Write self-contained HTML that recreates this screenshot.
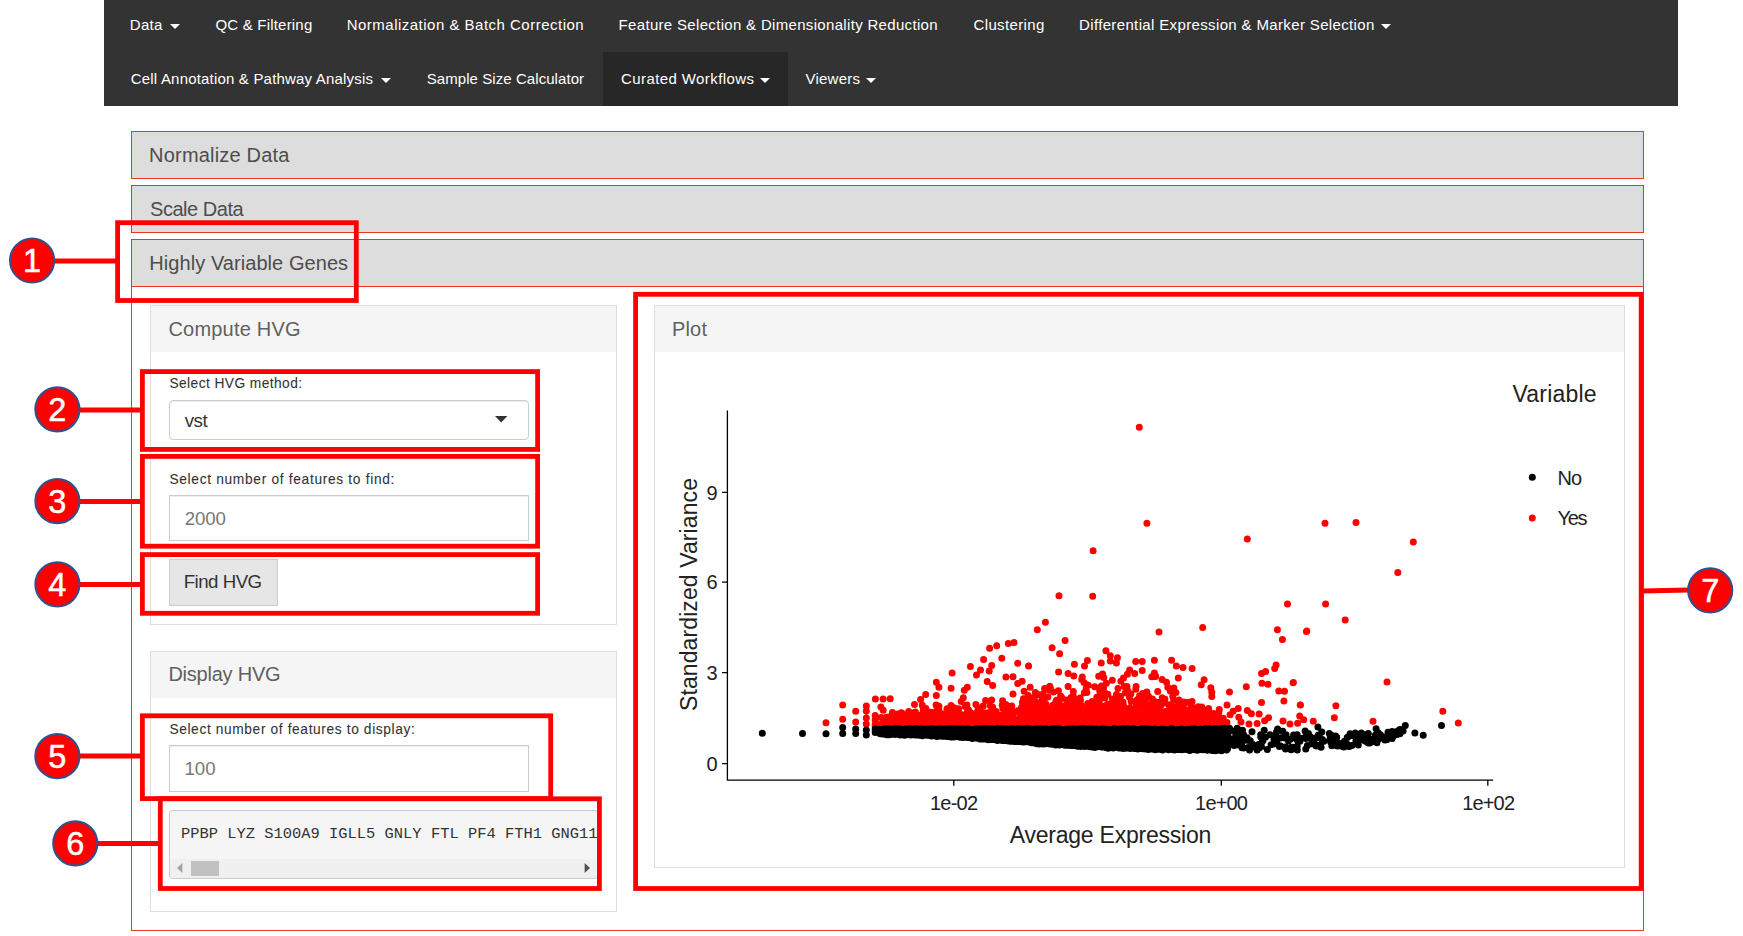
<!DOCTYPE html>
<html lang="en">
<head>
<meta charset="utf-8">
<title>Seurat Curated Workflow - Highly Variable Genes</title>
<style>
html,body{margin:0;padding:0;background:#fff;}
body{width:1743px;height:936px;position:relative;overflow:hidden;font-family:"Liberation Sans",sans-serif;}
.abs{position:absolute;box-sizing:border-box;}
.t{position:absolute;white-space:nowrap;line-height:1;}
#nav{left:104px;top:0;width:1574px;height:106px;background:#333;}
#active{left:603px;top:52px;width:185px;height:54px;background:#272727;}
.caret{position:absolute;width:0;height:0;border-left:5px solid transparent;border-right:5px solid transparent;border-top:5.4px solid #fff;}
.phead{background:#ddd;border:1px solid #e8391f;left:131px;width:1513px;height:48px;}
#pbody{left:131px;top:239px;width:1513px;height:692px;border:1px solid #e8391f;background:#fff;}
.card{border:1px solid #ddd;background:#fff;}
.chead{position:absolute;left:0;top:0;right:0;height:45.6px;background:#f5f5f5;}
.inp{border:1px solid #ccc;background:#fff;box-shadow:inset 0 1px 1px rgba(0,0,0,.075);}
#btn{left:169px;top:559px;width:109px;height:47px;background:#e6e6e6;border:1px solid #ccc;}
#pre{left:169px;top:810px;width:429px;height:69px;background:#f5f5f5;border:1px solid #ccc;border-radius:3px;overflow:hidden;}
#anno{position:absolute;left:0;top:0;width:1743px;height:936px;z-index:10;}
#plot{position:absolute;left:0;top:0;width:1743px;height:936px;z-index:2;}
#textlayer{position:absolute;left:0;top:0;width:1743px;height:936px;z-index:5;}
</style>
</head>
<body>
<nav id="nav" class="abs"></nav>
<div id="active" class="abs"></div>
<i class="caret" style="left:169.9px;top:24px"></i>
<i class="caret" style="left:1380.8px;top:24px"></i>
<i class="caret" style="left:380.8px;top:78px"></i>
<i class="caret" style="left:760px;top:78px"></i>
<i class="caret" style="left:865.6px;top:78px"></i>

<section class="abs phead" style="top:131px"></section>
<section class="abs phead" style="top:185px"></section>
<section id="pbody" class="abs"></section>
<section class="abs phead" style="top:239px"></section>

<div class="abs card" style="left:150px;top:305px;width:467px;height:320px"><div class="chead"></div></div>
<div class="abs card" style="left:150px;top:651px;width:467px;height:261px"><div class="chead"></div></div>
<div class="abs card" style="left:654px;top:305px;width:971px;height:563px"><div class="chead"></div></div>

<div class="abs inp" style="left:169px;top:400px;width:359.5px;height:40px;border-radius:4px"></div>
<svg class="abs" style="left:495px;top:416px" width="13" height="7" viewBox="0 0 13 7"><path d="M0 0h12.4L6.2 6.4z" fill="#333"/></svg>
<div class="abs inp" style="left:169px;top:495px;width:359.5px;height:46px"></div>
<div id="btn" class="abs"></div>
<div class="abs inp" style="left:169px;top:745px;width:359.5px;height:46.5px"></div>
<div id="pre" class="abs">
  <div class="abs" style="left:0;top:47.5px;width:429px;height:20px;background:#f0f0f0"></div>
  <div class="abs" style="left:20.5px;top:49.8px;width:28.8px;height:14.8px;background:#c1c1c1"></div>
  <svg class="abs" style="left:6px;top:51px" width="8" height="12" viewBox="0 0 8 12"><path d="M6.4 1v10L1 6z" fill="#a3a3a3"/></svg>
  <svg class="abs" style="left:413px;top:51px" width="8" height="12" viewBox="0 0 8 12"><path d="M1.6 1v10L7 6z" fill="#505050"/></svg>
</div>

<div id="textlayer">
<span class="t" style="left:129.80px;top:17.00px;font:400 15px/1 'Liberation Sans',sans-serif;color:#fff;letter-spacing:0.286px;">Data</span>
<span class="t" style="left:215.50px;top:17.00px;font:400 15px/1 'Liberation Sans',sans-serif;color:#fff;letter-spacing:0.196px;">QC &amp; Filtering</span>
<span class="t" style="left:346.70px;top:17.00px;font:400 15px/1 'Liberation Sans',sans-serif;color:#fff;letter-spacing:0.490px;">Normalization &amp; Batch Correction</span>
<span class="t" style="left:618.60px;top:17.00px;font:400 15px/1 'Liberation Sans',sans-serif;color:#fff;letter-spacing:0.321px;">Feature Selection &amp; Dimensionality Reduction</span>
<span class="t" style="left:973.50px;top:17.00px;font:400 15px/1 'Liberation Sans',sans-serif;color:#fff;letter-spacing:0.368px;">Clustering</span>
<span class="t" style="left:1079.00px;top:17.00px;font:400 15px/1 'Liberation Sans',sans-serif;color:#fff;letter-spacing:0.358px;">Differential Expression &amp; Marker Selection</span>
<span class="t" style="left:130.80px;top:71.30px;font:400 15px/1 'Liberation Sans',sans-serif;color:#fff;letter-spacing:0.187px;">Cell Annotation &amp; Pathway Analysis</span>
<span class="t" style="left:426.70px;top:71.30px;font:400 15px/1 'Liberation Sans',sans-serif;color:#fff;letter-spacing:0.071px;">Sample Size Calculator</span>
<span class="t" style="left:621.00px;top:71.30px;font:400 15px/1 'Liberation Sans',sans-serif;color:#fff;letter-spacing:0.411px;">Curated Workflows</span>
<span class="t" style="left:805.50px;top:71.30px;font:400 15px/1 'Liberation Sans',sans-serif;color:#fff;letter-spacing:0.237px;">Viewers</span>
<span class="t" style="left:149.10px;top:145.47px;font:400 20px/1 'Liberation Sans',sans-serif;color:#4d4d4d;letter-spacing:0.192px;">Normalize Data</span>
<span class="t" style="left:150.10px;top:199.47px;font:400 20px/1 'Liberation Sans',sans-serif;color:#4d4d4d;letter-spacing:-0.479px;">Scale Data</span>
<span class="t" style="left:149.30px;top:253.17px;font:400 20px/1 'Liberation Sans',sans-serif;color:#4d4d4d;letter-spacing:0.065px;">Highly Variable Genes</span>
<span class="t" style="left:168.40px;top:318.87px;font:400 20px/1 'Liberation Sans',sans-serif;color:#606060;letter-spacing:0.211px;">Compute HVG</span>
<span class="t" style="left:168.40px;top:664.17px;font:400 20px/1 'Liberation Sans',sans-serif;color:#606060;letter-spacing:-0.232px;">Display HVG</span>
<span class="t" style="left:671.90px;top:318.87px;font:400 20px/1 'Liberation Sans',sans-serif;color:#606060;letter-spacing:0.198px;">Plot</span>
<span class="t" style="left:169.40px;top:377.36px;font:400 13.75px/1 'Liberation Sans',sans-serif;color:#333;letter-spacing:0.434px;-webkit-text-stroke:0.08px #333;">Select HVG method:</span>
<span class="t" style="left:169.40px;top:472.76px;font:400 13.75px/1 'Liberation Sans',sans-serif;color:#333;letter-spacing:0.681px;-webkit-text-stroke:0.08px #333;">Select number of features to find:</span>
<span class="t" style="left:169.40px;top:722.76px;font:400 13.75px/1 'Liberation Sans',sans-serif;color:#333;letter-spacing:0.618px;-webkit-text-stroke:0.08px #333;">Select number of features to display:</span>
<span class="t" style="left:184.70px;top:412.17px;font:400 18.7px/1 'Liberation Sans',sans-serif;color:#333;letter-spacing:-0.494px;">vst</span>
<span class="t" style="left:184.70px;top:509.87px;font:400 18.7px/1 'Liberation Sans',sans-serif;color:#777;letter-spacing:-0.160px;">2000</span>
<span class="t" style="left:184.40px;top:760.37px;font:400 18.7px/1 'Liberation Sans',sans-serif;color:#777;letter-spacing:0.057px;">100</span>
<span class="t" style="left:183.70px;top:573.07px;font:400 18.7px/1 'Liberation Sans',sans-serif;color:#333;letter-spacing:-0.515px;">Find HVG</span>
<span class="t" style="left:181.00px;top:826.64px;font:400 15.43px/1 'Liberation Mono',sans-serif;color:#333;letter-spacing:0.000px;white-space:pre;clip-path:inset(-5px 277.7px -5px -5px);">PPBP LYZ S100A9 IGLL5 GNLY FTL PF4 FTH1 GNG11 S100A8 NKG7 HLA-DRA GZMB CD74</span>
</div>

<svg id="plot" viewBox="0 0 1743 936" font-family="'Liberation Sans',sans-serif">
  <g stroke="#000" stroke-width="1.3" fill="none">
    <path d="M727.4 410.6V780.1H1493.2"/>
    <path d="M722 492.4h5.4M722 582.1h5.4M722 672.6h5.4M722 763.6h5.4"/>
    <path d="M953.8 780v5.8M1221.3 780v5.8M1487.8 780v5.8"/>
  </g>
  <path d="M826.0 722.8h.01M842.7 719.3h.01M842.7 705.0h.01M855.7 722.0h.01M855.7 711.2h.01M866.3 724.0h.01M866.3 718.0h.01M866.3 711.0h.01M866.3 706.0h.01M875.2 724.4h.01M875.2 726.1h.01M875.2 719.9h.01M875.2 725.5h.01M875.2 715.4h.01M875.2 724.6h.01M875.2 726.3h.01M875.2 725.2h.01M883.0 726.3h.01M883.0 721.9h.01M883.0 725.0h.01M883.0 724.1h.01M883.0 720.2h.01M883.0 725.4h.01M883.0 723.5h.01M883.0 721.3h.01M889.8 720.4h.01M889.8 717.8h.01M889.8 721.5h.01M889.8 722.9h.01M889.8 718.8h.01M889.8 723.8h.01M889.8 726.2h.01M889.8 722.1h.01M895.9 726.2h.01M895.9 725.9h.01M895.9 724.3h.01M895.9 726.1h.01M895.9 723.0h.01M895.9 719.0h.01M895.9 725.1h.01M895.9 724.6h.01M901.4 726.5h.01M901.4 724.4h.01M901.4 712.7h.01M901.4 723.2h.01M901.4 721.4h.01M901.4 716.1h.01M901.4 717.1h.01M906.5 724.6h.01M906.5 726.5h.01M906.5 726.0h.01M906.5 726.4h.01M906.5 722.2h.01M906.5 725.2h.01M906.5 724.4h.01M911.1 718.4h.01M911.1 726.4h.01M911.1 723.0h.01M911.1 722.9h.01M911.1 723.1h.01M911.1 717.4h.01M911.1 725.1h.01M915.4 717.6h.01M915.4 718.6h.01M915.4 725.3h.01M915.4 724.5h.01M915.4 726.4h.01M915.4 725.1h.01M915.4 712.0h.01M919.4 721.9h.01M919.4 717.9h.01M919.4 721.6h.01M919.4 726.1h.01M919.4 715.3h.01M919.4 720.0h.01M919.4 725.6h.01M923.2 725.9h.01M923.2 715.5h.01M923.2 725.8h.01M923.2 708.1h.01M923.2 724.5h.01M923.2 725.8h.01M923.2 709.9h.01M926.7 724.9h.01M926.7 722.3h.01M926.7 723.9h.01M926.7 715.1h.01M926.7 723.6h.01M926.7 715.4h.01M926.7 714.7h.01M930.0 725.6h.01M930.0 720.4h.01M930.0 724.6h.01M930.0 722.6h.01M930.0 726.0h.01M930.0 725.1h.01M930.0 719.5h.01M933.1 720.9h.01M933.1 722.9h.01M933.1 712.9h.01M933.1 716.5h.01M933.1 725.1h.01M933.1 712.8h.01M933.1 725.8h.01M936.1 725.7h.01M936.1 721.3h.01M936.1 716.2h.01M936.1 725.3h.01M936.1 724.1h.01M936.1 705.0h.01M936.1 725.7h.01M938.9 723.7h.01M938.9 724.6h.01M938.9 723.0h.01M938.9 706.2h.01M938.9 710.0h.01M938.9 725.0h.01M941.6 725.7h.01M941.6 722.4h.01M941.6 726.0h.01M941.6 720.9h.01M941.6 726.1h.01M941.6 721.6h.01M944.2 713.8h.01M944.2 725.8h.01M944.2 725.2h.01M944.2 725.6h.01M944.2 725.4h.01M944.2 724.7h.01M946.7 720.0h.01M946.7 725.5h.01M946.7 713.2h.01M946.7 718.1h.01M946.7 723.2h.01M946.7 724.1h.01M949.1 724.0h.01M949.1 726.2h.01M949.1 726.1h.01M949.1 725.1h.01M949.1 726.1h.01M949.1 716.5h.01M951.3 725.0h.01M951.3 708.8h.01M951.3 725.1h.01M951.3 724.7h.01M951.3 726.5h.01M951.3 723.3h.01M953.5 726.3h.01M953.5 724.7h.01M953.5 722.1h.01M953.5 719.6h.01M953.5 720.3h.01M953.5 724.1h.01M955.6 715.5h.01M955.6 719.9h.01M955.6 725.8h.01M955.6 723.0h.01M955.6 718.4h.01M955.6 722.1h.01M957.7 725.9h.01M957.7 722.4h.01M957.7 721.6h.01M957.7 723.2h.01M957.7 718.5h.01M957.7 723.0h.01M959.6 720.0h.01M959.6 719.8h.01M959.6 723.1h.01M959.6 723.2h.01M959.6 719.2h.01M959.6 721.4h.01M961.5 726.2h.01M961.5 720.9h.01M961.5 720.8h.01M961.5 722.8h.01M961.5 723.3h.01M963.4 717.7h.01M963.4 723.4h.01M963.4 725.3h.01M963.4 725.3h.01M963.4 725.7h.01M965.2 720.2h.01M965.2 714.7h.01M965.2 726.4h.01M965.2 723.0h.01M965.2 724.6h.01M966.9 716.9h.01M966.9 712.8h.01M966.9 714.3h.01M966.9 724.1h.01M966.9 705.0h.01M968.6 716.9h.01M968.6 711.9h.01M968.6 724.9h.01M968.6 725.4h.01M968.6 709.9h.01M970.2 719.7h.01M970.2 719.4h.01M970.2 719.0h.01M970.2 724.7h.01M970.2 712.4h.01M971.8 724.9h.01M971.8 724.6h.01M971.8 723.8h.01M971.8 725.5h.01M971.8 713.6h.01M973.4 725.3h.01M973.4 724.2h.01M973.4 725.0h.01M973.4 721.9h.01M973.4 718.9h.01M974.9 724.7h.01M974.9 725.8h.01M974.9 721.0h.01M974.9 725.1h.01M974.9 724.9h.01M976.3 726.3h.01M976.3 713.8h.01M976.3 721.5h.01M976.3 723.7h.01M976.3 716.7h.01M977.8 722.3h.01M977.8 710.4h.01M977.8 720.6h.01M977.8 723.0h.01M979.2 720.6h.01M979.2 725.7h.01M979.2 720.7h.01M979.2 725.8h.01M980.5 721.2h.01M980.5 724.4h.01M980.5 708.1h.01M980.5 714.1h.01M981.9 724.4h.01M981.9 722.5h.01M981.9 723.3h.01M981.9 720.1h.01M983.2 719.8h.01M983.2 717.1h.01M983.2 722.4h.01M983.2 705.9h.01M984.4 724.4h.01M984.4 722.4h.01M984.4 725.0h.01M984.4 720.0h.01M985.7 725.6h.01M985.7 726.1h.01M985.7 712.9h.01M985.7 718.6h.01M986.9 718.3h.01M986.9 719.9h.01M986.9 723.7h.01M986.9 725.4h.01M988.1 725.7h.01M988.1 725.1h.01M988.1 716.1h.01M988.1 723.1h.01M989.3 725.2h.01M989.3 712.6h.01M989.3 723.3h.01M989.3 717.6h.01M990.4 724.7h.01M990.4 712.4h.01M990.4 724.5h.01M991.6 724.1h.01M991.6 726.5h.01M991.6 711.2h.01M992.7 722.5h.01M992.7 707.3h.01M992.7 724.7h.01M993.7 716.3h.01M993.7 715.7h.01M993.7 720.6h.01M994.8 726.0h.01M994.8 717.7h.01M994.8 726.1h.01M995.9 712.9h.01M995.9 724.5h.01M995.9 725.9h.01M996.9 724.8h.01M996.9 720.3h.01M996.9 717.7h.01M997.9 714.7h.01M997.9 721.1h.01M997.9 717.9h.01M998.9 725.4h.01M998.9 720.9h.01M998.9 723.2h.01M1164.7 723.8h.01M1077.0 726.5h.01M1005.6 718.8h.01M1162.8 715.1h.01M1068.0 711.4h.01M1135.9 723.6h.01M1096.5 715.2h.01M1152.9 723.8h.01M1024.0 722.8h.01M939.6 724.4h.01M1153.1 716.0h.01M972.8 719.3h.01M949.1 719.7h.01M962.4 726.0h.01M1003.0 721.6h.01M1009.6 710.4h.01M1158.8 712.7h.01M1104.3 722.8h.01M1212.8 726.4h.01M1030.7 722.8h.01M982.9 723.2h.01M1182.4 723.2h.01M893.7 716.6h.01M1010.4 724.7h.01M949.1 724.3h.01M950.3 725.5h.01M1002.4 720.7h.01M1068.9 722.3h.01M1093.7 708.2h.01M1151.6 721.3h.01M1204.5 721.2h.01M1078.1 721.8h.01M956.7 715.7h.01M1118.3 725.2h.01M1206.5 726.3h.01M1145.0 723.1h.01M1096.6 704.2h.01M1037.6 719.4h.01M1134.9 723.8h.01M1123.6 719.6h.01M1147.9 726.0h.01M1011.1 725.5h.01M962.9 722.7h.01M973.4 717.8h.01M939.8 721.8h.01M1189.3 724.6h.01M1163.0 719.4h.01M1053.4 691.9h.01M1035.4 692.5h.01M1099.7 691.1h.01M949.4 717.2h.01M1165.6 711.4h.01M1116.1 725.2h.01M1168.2 712.8h.01M1026.3 716.0h.01M1057.5 711.1h.01M912.9 714.0h.01M1048.9 708.9h.01M1076.9 706.9h.01M1020.7 719.8h.01M901.9 723.5h.01M931.6 717.2h.01M1138.3 719.6h.01M1219.3 709.6h.01M933.2 720.7h.01M1152.6 715.1h.01M895.4 715.3h.01M1066.5 716.2h.01M1176.7 723.4h.01M904.5 714.8h.01M1009.8 726.2h.01M957.8 715.9h.01M987.3 725.5h.01M1199.1 720.6h.01M955.4 723.9h.01M1060.2 725.8h.01M1213.9 718.9h.01M912.3 721.0h.01M1083.6 718.4h.01M961.4 722.9h.01M1173.2 725.1h.01M1193.3 724.3h.01M998.3 722.5h.01M1129.7 716.0h.01M1197.1 721.6h.01M896.0 724.8h.01M1024.8 725.3h.01M1059.9 726.1h.01M1205.2 713.2h.01M1144.1 710.1h.01M1161.2 722.4h.01M1153.0 723.7h.01M1102.4 715.2h.01M1165.9 724.5h.01M1035.4 709.0h.01M1173.9 688.0h.01M949.8 725.3h.01M944.6 720.2h.01M1157.6 714.2h.01M1167.0 718.7h.01M1104.7 694.8h.01M1130.0 713.2h.01M1112.6 718.0h.01M1160.8 716.8h.01M954.5 723.8h.01M1060.9 720.2h.01M1104.3 720.9h.01M1051.1 720.4h.01M1044.6 688.4h.01M937.0 726.4h.01M1150.9 720.3h.01M1069.8 716.2h.01M1043.1 723.6h.01M895.1 717.5h.01M1074.9 721.9h.01M921.1 716.1h.01M1182.6 724.1h.01M1004.1 718.2h.01M1171.8 720.0h.01M1049.9 723.6h.01M1172.2 706.0h.01M1188.4 719.3h.01M1073.0 724.7h.01M922.2 720.3h.01M926.4 718.7h.01M1135.0 718.5h.01M1197.5 719.9h.01M941.4 722.2h.01M1060.8 723.3h.01M1207.3 725.7h.01M994.5 723.9h.01M1107.9 721.6h.01M1066.8 707.4h.01M976.3 719.4h.01M1030.9 698.8h.01M1117.7 725.0h.01M1057.4 715.7h.01M1127.0 721.3h.01M907.3 725.9h.01M1104.1 724.2h.01M1022.4 718.1h.01M1199.9 724.5h.01M1111.7 722.5h.01M1167.8 724.7h.01M1006.7 722.4h.01M980.5 725.7h.01M988.7 724.0h.01M1052.4 710.9h.01M1055.3 719.4h.01M1052.9 710.2h.01M1200.6 709.6h.01M1002.6 700.8h.01M1093.5 712.4h.01M1047.9 723.1h.01M957.1 715.7h.01M1040.7 713.9h.01M1073.5 717.8h.01M986.1 725.3h.01M1032.8 715.3h.01M1099.0 726.5h.01M1147.8 719.4h.01M926.6 725.1h.01M988.0 716.0h.01M1101.0 721.6h.01M1001.8 724.2h.01M1013.2 723.2h.01M1170.1 710.2h.01M1144.3 699.5h.01M1131.6 725.0h.01M913.5 725.7h.01M1005.3 721.2h.01M1178.7 718.2h.01M1063.6 723.4h.01M1034.5 726.0h.01M1185.7 717.6h.01M1039.6 703.5h.01M1019.2 725.6h.01M983.0 716.9h.01M1139.6 722.4h.01M1010.5 725.8h.01M1119.5 721.1h.01M978.3 723.2h.01M969.4 721.2h.01M1132.5 717.6h.01M975.5 714.9h.01M946.5 725.6h.01M999.3 721.8h.01M1078.4 717.0h.01M1152.4 699.0h.01M1075.9 726.0h.01M1181.1 726.3h.01M1026.5 725.1h.01M1116.5 707.5h.01M954.4 724.8h.01M1186.6 725.6h.01M1140.9 706.7h.01M1056.8 724.6h.01M1133.1 721.7h.01M956.5 725.6h.01M1054.8 725.0h.01M1049.1 717.8h.01M1101.6 720.0h.01M1172.7 725.6h.01M1030.6 700.6h.01M1190.2 715.3h.01M1096.7 707.3h.01M1107.7 724.9h.01M1004.3 725.8h.01M1193.1 722.7h.01M1097.4 725.2h.01M1146.4 706.7h.01M1171.6 704.5h.01M1026.3 725.1h.01M1162.1 713.2h.01M1044.7 722.0h.01M964.9 717.3h.01M1073.5 707.1h.01M1034.0 722.7h.01M1089.8 709.9h.01M1195.1 718.2h.01M1055.2 704.7h.01M1161.7 717.3h.01M1041.6 723.1h.01M1195.7 724.0h.01M934.3 725.5h.01M1175.4 719.0h.01M1102.2 716.8h.01M1057.4 717.5h.01M936.9 714.4h.01M942.9 725.8h.01M1137.0 713.7h.01M1174.5 714.6h.01M891.5 725.4h.01M1166.9 724.7h.01M1095.3 708.3h.01M966.0 722.6h.01M1199.9 723.1h.01M1079.2 722.7h.01M1215.7 720.1h.01M1021.7 715.1h.01M1081.6 707.5h.01M1042.1 704.0h.01M1140.4 719.0h.01M1104.8 706.1h.01M1094.7 686.8h.01M888.6 717.0h.01M1148.8 718.1h.01M1186.3 723.1h.01M1148.7 704.8h.01M1045.1 709.1h.01M914.0 725.9h.01M930.3 722.5h.01M1027.9 723.7h.01M1069.3 725.6h.01M1202.1 721.2h.01M1068.3 722.3h.01M1116.7 721.2h.01M1219.6 719.5h.01M1179.8 725.8h.01M952.2 724.4h.01M953.2 723.8h.01M1222.4 724.4h.01M991.8 726.4h.01M1010.9 726.1h.01M1094.4 722.1h.01M1137.3 716.2h.01M1115.1 722.0h.01M1154.6 712.4h.01M1148.8 718.5h.01M1074.5 722.6h.01M911.0 723.6h.01M1120.6 723.9h.01M1189.0 711.3h.01M1177.1 720.0h.01M973.9 724.8h.01M1155.4 676.6h.01M946.7 726.5h.01M1038.6 722.1h.01M1115.2 725.0h.01M1184.6 723.0h.01M1022.1 724.8h.01M1179.7 725.9h.01M1098.8 710.0h.01M1221.8 725.9h.01M1045.2 712.1h.01M902.1 713.3h.01M1007.4 720.5h.01M1041.0 717.4h.01M1208.7 713.7h.01M1004.8 714.5h.01M897.3 724.1h.01M1043.2 717.3h.01M997.4 718.6h.01M1131.2 725.3h.01M1143.8 721.1h.01M960.7 726.1h.01M1072.9 708.1h.01M1218.1 722.3h.01M1011.4 720.9h.01M1136.2 703.4h.01M1056.9 717.4h.01M1186.0 710.1h.01M901.5 723.0h.01M1108.4 724.5h.01M1205.6 725.2h.01M1057.8 716.6h.01M1063.4 726.5h.01M938.0 720.5h.01M955.7 725.0h.01M1174.7 706.7h.01M886.7 720.7h.01M1115.6 720.8h.01M897.4 724.0h.01M997.6 720.8h.01M929.6 720.9h.01M945.0 725.3h.01M1066.7 717.2h.01M1025.8 720.6h.01M968.5 723.8h.01M1144.9 721.6h.01M1171.7 724.4h.01M942.2 721.7h.01M1071.0 697.6h.01M943.9 719.8h.01M1136.2 720.7h.01M954.2 721.8h.01M1161.1 719.2h.01M1077.2 712.9h.01M1118.6 719.6h.01M978.0 723.0h.01M1100.9 698.2h.01M1030.2 724.1h.01M1124.8 709.7h.01M1001.5 718.7h.01M1131.1 701.3h.01M984.8 724.0h.01M1022.4 720.8h.01M1157.4 714.8h.01M1207.6 726.5h.01M927.8 726.3h.01M1064.3 726.2h.01M1093.7 714.2h.01M984.4 715.0h.01M1058.4 690.7h.01M1040.1 716.3h.01M1098.5 722.7h.01M1167.1 726.5h.01M1002.2 723.9h.01M1194.9 726.2h.01M1019.9 718.5h.01M1175.1 725.3h.01M1167.0 721.2h.01M1093.1 719.8h.01M1066.4 700.1h.01M1204.5 718.8h.01M959.8 726.3h.01M1181.1 716.3h.01M1124.9 721.8h.01M1008.6 707.8h.01M1095.5 726.3h.01M1034.2 722.2h.01M925.9 708.5h.01M1200.5 726.5h.01M1059.7 725.2h.01M1152.1 706.1h.01M1169.8 710.0h.01M950.9 726.4h.01M938.2 717.6h.01M1180.7 719.9h.01M996.6 714.1h.01M950.7 724.6h.01M883.2 710.2h.01M1058.9 710.1h.01M1173.1 717.6h.01M1206.9 726.0h.01M1159.0 723.5h.01M1028.8 722.6h.01M1065.3 724.9h.01M1145.3 717.3h.01M1163.6 721.9h.01M1058.4 711.3h.01M1145.5 699.2h.01M1023.5 709.8h.01M1155.3 716.3h.01M1056.7 717.2h.01M930.5 726.0h.01M1024.2 725.3h.01M915.9 720.7h.01M1153.6 714.9h.01M985.8 718.9h.01M1179.7 717.5h.01M993.9 721.3h.01M1052.3 723.1h.01M962.8 716.3h.01M1125.3 692.8h.01M972.4 724.8h.01M1088.6 725.8h.01M1021.0 719.8h.01M1080.1 698.1h.01M1109.2 713.8h.01M1111.5 707.3h.01M1042.9 726.5h.01M1220.9 725.8h.01M946.9 725.3h.01M1132.8 724.7h.01M898.4 723.5h.01M887.6 725.3h.01M1048.2 724.0h.01M883.8 725.3h.01M1000.0 724.0h.01M1058.7 721.5h.01M1028.6 726.3h.01M1182.9 714.7h.01M1083.5 726.5h.01M996.1 711.8h.01M1072.4 723.8h.01M1178.1 705.3h.01M951.5 723.1h.01M1104.4 724.9h.01M1027.0 717.6h.01M1137.2 714.1h.01M1121.8 720.6h.01M926.5 726.4h.01M1182.9 708.9h.01M1164.2 724.4h.01M1036.2 724.2h.01M1189.0 712.4h.01M1047.9 696.9h.01M1006.0 720.4h.01M1137.2 723.2h.01M1048.0 725.4h.01M1171.8 724.4h.01M957.5 724.9h.01M1127.6 713.8h.01M1093.3 702.9h.01M1159.5 723.8h.01M1096.3 724.2h.01M999.3 725.5h.01M930.6 724.4h.01M1196.1 725.9h.01M990.8 721.0h.01M1094.8 726.2h.01M938.7 722.5h.01M1116.2 725.5h.01M1165.2 723.5h.01M1112.7 717.1h.01M1034.1 697.5h.01M1052.6 720.5h.01M1098.0 703.7h.01M1097.6 710.8h.01M1127.0 686.5h.01M1218.3 725.2h.01M1106.5 719.3h.01M995.4 716.9h.01M991.6 718.9h.01M1082.4 719.9h.01M1146.7 710.4h.01M1223.3 718.3h.01M1007.4 718.5h.01M1084.3 692.7h.01M1069.2 721.4h.01M902.3 723.6h.01M1095.7 721.9h.01M943.9 723.3h.01M927.4 725.6h.01M1068.2 721.6h.01M1085.8 717.4h.01M1050.3 724.9h.01M897.3 722.9h.01M1038.0 722.5h.01M1156.8 718.5h.01M1171.6 726.4h.01M956.1 725.4h.01M1043.8 721.1h.01M1049.2 690.1h.01M1066.7 716.7h.01M1114.3 704.5h.01M1032.2 726.1h.01M1110.6 725.6h.01M1157.5 721.0h.01M1128.4 722.3h.01M1011.6 709.3h.01M992.1 724.5h.01M1081.7 679.5h.01M948.6 725.3h.01M1171.5 725.7h.01M1058.7 709.5h.01M1148.4 706.8h.01M949.3 715.7h.01M1039.8 708.9h.01M1076.9 700.5h.01M1078.9 723.0h.01M963.7 723.0h.01M916.5 725.7h.01M1192.9 712.0h.01M963.7 723.1h.01M1076.0 725.2h.01M1007.2 708.1h.01M1151.4 717.7h.01M1118.7 701.8h.01M916.8 717.0h.01M969.4 725.0h.01M957.9 722.9h.01M1110.7 718.8h.01M1076.4 724.7h.01M1149.9 716.9h.01M1023.4 710.6h.01M1210.0 725.5h.01M1050.3 720.0h.01M1004.8 717.0h.01M1087.6 685.1h.01M1196.7 725.7h.01M1072.1 718.1h.01M1168.7 724.3h.01M1013.0 693.9h.01M892.3 722.5h.01M939.2 719.8h.01M1061.7 697.4h.01M992.4 713.5h.01M994.0 726.2h.01M935.1 726.1h.01M1050.3 687.7h.01M1039.1 713.4h.01M907.6 723.2h.01M1097.8 725.2h.01M1109.9 719.1h.01M1029.8 709.7h.01M1142.3 724.9h.01M944.3 726.2h.01M1007.2 719.2h.01M1217.8 715.5h.01M952.5 718.7h.01M1162.2 719.3h.01M949.8 725.3h.01M954.8 721.8h.01M1123.0 702.1h.01M891.2 726.5h.01M1007.5 711.9h.01M946.7 718.8h.01M1198.8 720.2h.01M887.4 722.6h.01M1119.9 708.1h.01M1091.0 725.0h.01M992.1 719.9h.01M931.8 726.0h.01M1002.6 715.7h.01M1099.9 721.0h.01M998.1 721.1h.01M1187.8 721.9h.01M1109.2 706.2h.01M976.1 721.6h.01M1027.7 720.6h.01M1148.5 726.2h.01M1088.1 721.9h.01M1115.6 705.0h.01M1075.5 714.9h.01M1016.3 724.1h.01M1088.8 717.3h.01M992.4 717.5h.01M1085.6 721.2h.01M1003.7 714.1h.01M1200.3 724.6h.01M927.7 721.8h.01M901.6 717.7h.01M1138.8 721.4h.01M1067.4 713.4h.01M967.6 724.1h.01M1169.1 714.4h.01M1111.5 725.1h.01M990.0 724.7h.01M905.8 721.9h.01M1107.8 694.2h.01M1102.3 695.2h.01M1076.1 718.0h.01M1013.6 721.6h.01M883.5 724.7h.01M982.6 720.8h.01M1088.6 718.7h.01M1206.9 725.9h.01M905.3 721.0h.01M1114.9 713.3h.01M1085.9 726.1h.01M1070.6 705.7h.01M1116.4 725.9h.01M952.5 714.9h.01M1099.5 724.3h.01M1146.7 694.2h.01M1190.4 713.8h.01M935.7 723.5h.01M1175.5 722.4h.01M960.8 716.4h.01M1146.1 726.4h.01M923.8 722.7h.01M1214.0 714.5h.01M943.9 722.3h.01M976.3 724.2h.01M963.1 723.3h.01M914.5 721.6h.01M1129.4 697.1h.01M1163.9 725.6h.01M1191.4 705.7h.01M1083.3 725.5h.01M1145.9 724.1h.01M1200.3 723.9h.01M1134.0 711.0h.01M1073.3 722.8h.01M1060.6 712.5h.01M994.3 725.4h.01M1080.8 713.8h.01M925.4 725.0h.01M1164.9 722.5h.01M934.9 723.3h.01M1191.6 726.1h.01M1145.8 714.4h.01M1080.3 713.6h.01M1092.4 724.0h.01M1143.5 724.8h.01M1023.7 709.6h.01M1106.4 717.6h.01M1147.6 718.0h.01M1048.8 717.8h.01M900.0 724.6h.01M910.6 714.3h.01M1131.6 724.3h.01M1187.7 713.3h.01M1130.8 714.9h.01M1156.5 722.8h.01M1182.0 719.5h.01M1160.8 705.6h.01M1004.0 722.9h.01M1041.3 725.7h.01M1193.2 721.6h.01M1099.6 700.1h.01M927.0 724.4h.01M1140.9 716.9h.01M1084.9 722.9h.01M992.3 719.6h.01M1034.4 698.9h.01M1200.2 724.3h.01M1090.2 725.2h.01M1040.6 725.7h.01M1086.2 688.6h.01M1162.3 721.4h.01M1011.8 705.9h.01M918.0 717.8h.01M1187.9 702.2h.01M1129.4 720.3h.01M1062.2 716.0h.01M1094.0 701.6h.01M1198.4 726.4h.01M1166.8 715.2h.01M1131.9 725.5h.01M930.0 715.6h.01M1042.1 719.7h.01M1126.2 725.7h.01M1104.3 709.7h.01M966.5 719.0h.01M1217.8 717.9h.01M1212.2 721.9h.01M1179.3 711.2h.01M1124.4 712.7h.01M975.0 724.2h.01M1029.1 708.1h.01M1167.6 722.8h.01M922.8 724.6h.01M930.7 712.3h.01M1040.4 721.3h.01M1187.6 718.4h.01M1066.9 719.5h.01M1093.5 718.5h.01M959.7 725.7h.01M1087.8 707.1h.01M1064.4 725.8h.01M1130.4 724.5h.01M1006.1 722.6h.01M1160.4 720.0h.01M1060.0 720.8h.01M1092.1 722.5h.01M956.0 722.5h.01M1037.9 713.4h.01M910.7 721.3h.01M1042.3 698.8h.01M1020.3 721.7h.01M1026.3 719.5h.01M1013.5 717.8h.01M1057.8 712.8h.01M1017.3 721.5h.01M1103.1 710.7h.01M1131.2 719.5h.01M934.9 725.9h.01M962.0 725.5h.01M977.0 720.4h.01M1034.3 702.8h.01M996.4 724.7h.01M976.8 725.6h.01M1139.7 715.7h.01M1002.8 715.2h.01M1137.8 719.5h.01M1118.2 713.1h.01M1067.2 725.4h.01M1042.3 695.6h.01M1045.3 715.6h.01M936.1 719.4h.01M1190.1 722.9h.01M1089.7 723.0h.01M987.3 725.7h.01M1141.1 717.6h.01M1214.6 714.7h.01M1211.5 726.4h.01M954.7 708.0h.01M1192.7 719.4h.01M1065.8 720.2h.01M961.6 722.5h.01M1011.3 725.5h.01M1191.8 710.9h.01M1018.1 719.4h.01M1012.0 712.8h.01M987.0 720.2h.01M1102.5 721.6h.01M932.1 723.3h.01M1092.8 705.6h.01M984.7 725.3h.01M1022.2 712.4h.01M995.7 720.1h.01M906.2 726.1h.01M1147.1 717.9h.01M947.3 723.4h.01M1103.1 719.7h.01M1087.4 726.0h.01M1195.1 723.5h.01M1014.7 724.8h.01M1208.7 723.6h.01M1116.8 716.4h.01M983.6 726.3h.01M1154.8 724.4h.01M1105.5 726.3h.01M899.7 725.7h.01M1131.5 714.6h.01M1092.5 726.3h.01M1182.3 720.7h.01M989.9 723.3h.01M929.7 722.4h.01M990.8 719.1h.01M973.1 720.1h.01M1121.0 711.0h.01M1139.9 720.2h.01M1198.1 716.7h.01M1115.9 722.7h.01M1201.8 706.9h.01M1033.4 709.5h.01M1138.8 703.6h.01M1173.3 720.3h.01M1052.5 709.2h.01M1131.8 716.8h.01M893.6 723.8h.01M940.3 717.6h.01M936.0 716.2h.01M993.0 725.6h.01M1159.9 713.5h.01M1057.4 716.5h.01M1101.9 689.4h.01M1088.1 717.1h.01M1073.9 720.3h.01M1141.9 725.0h.01M1142.6 693.5h.01M1162.0 717.6h.01M1038.6 725.4h.01M938.0 722.8h.01M1194.4 725.1h.01M1158.6 707.3h.01M1079.5 703.4h.01M978.3 724.2h.01M1090.1 710.7h.01M1069.7 722.4h.01M1190.9 722.4h.01M992.5 722.4h.01M1146.5 720.9h.01M1134.0 718.0h.01M892.4 712.5h.01M1016.0 720.1h.01M924.0 725.4h.01M964.6 716.6h.01M1091.0 726.0h.01M1010.2 721.1h.01M973.4 724.5h.01M1200.9 724.7h.01M1115.2 725.0h.01M1091.9 713.7h.01M936.2 722.7h.01M1023.6 714.4h.01M1120.5 696.5h.01M1118.0 724.0h.01M977.8 719.6h.01M1175.5 725.9h.01M1059.5 722.8h.01M1075.6 702.4h.01M1103.9 709.5h.01M1163.0 722.9h.01M1121.4 720.6h.01M1077.7 717.6h.01M1135.4 724.2h.01M1183.1 725.0h.01M1024.8 709.5h.01M908.0 719.9h.01M968.1 719.1h.01M888.4 725.9h.01M1040.0 725.6h.01M1076.8 721.5h.01M1155.7 718.4h.01M1216.9 725.5h.01M1204.3 721.2h.01M1094.0 724.2h.01M1027.5 724.2h.01M981.9 721.0h.01M1028.7 712.8h.01M1107.9 704.6h.01M935.6 717.5h.01M1088.1 714.4h.01M998.1 718.8h.01M1056.0 712.4h.01M1111.2 724.6h.01M1020.5 714.6h.01M895.5 722.1h.01M1099.6 710.8h.01M1030.3 720.3h.01M1078.5 710.2h.01M928.6 723.1h.01M1005.8 720.2h.01M1005.8 724.9h.01M995.5 712.2h.01M1042.0 704.1h.01M1154.8 722.7h.01M1102.2 726.4h.01M1208.4 725.8h.01M1091.5 718.1h.01M1136.4 722.2h.01M1202.3 726.0h.01M1177.8 705.8h.01M1021.8 715.7h.01M1189.0 725.9h.01M1182.7 724.0h.01M1173.2 714.7h.01M1075.0 699.4h.01M1173.6 699.8h.01M1107.9 709.9h.01M1136.4 720.1h.01M1085.4 718.0h.01M989.5 724.7h.01M1184.8 710.5h.01M1144.0 711.9h.01M1088.8 716.2h.01M1135.2 726.4h.01M1068.1 686.5h.01M985.7 722.7h.01M930.8 725.1h.01M1179.3 726.2h.01M1172.4 710.1h.01M1191.2 706.2h.01M1044.7 720.1h.01M1139.3 725.0h.01M886.3 725.2h.01M944.1 718.0h.01M1002.2 705.3h.01M1138.6 723.8h.01M1147.8 721.7h.01M1094.0 725.5h.01M1181.6 712.6h.01M1110.2 711.8h.01M1034.0 725.1h.01M1029.0 713.8h.01M1104.9 724.7h.01M998.9 722.3h.01M894.4 726.3h.01M1070.0 724.8h.01M1158.7 708.1h.01M1025.6 719.4h.01M1049.8 686.2h.01M1005.9 704.5h.01M1023.7 721.6h.01M1025.7 716.9h.01M1195.0 725.1h.01M1087.7 703.6h.01M944.9 722.1h.01M1168.8 710.6h.01M1137.1 725.7h.01M1079.0 722.8h.01M1118.2 720.2h.01M1072.0 717.6h.01M1112.4 698.9h.01M1013.9 724.0h.01M977.4 725.8h.01M1186.1 725.4h.01M1040.9 701.8h.01M1190.1 719.8h.01M925.3 725.1h.01M1086.5 726.3h.01M1003.7 722.1h.01M1139.6 724.4h.01M951.9 724.5h.01M937.3 725.9h.01M943.0 718.7h.01M1173.9 707.7h.01M1130.7 722.0h.01M1178.2 725.7h.01M914.7 712.2h.01M991.6 711.2h.01M1160.0 725.9h.01M938.9 721.5h.01M961.7 720.9h.01M1136.9 723.2h.01M1078.5 723.7h.01M1192.0 717.8h.01M1122.2 725.7h.01M1196.0 721.5h.01M1113.1 718.0h.01M1160.4 717.8h.01M1012.4 720.9h.01M988.7 726.5h.01M1092.1 701.5h.01M1150.3 723.6h.01M1088.3 715.9h.01M1109.8 718.8h.01M1088.6 712.4h.01M1194.7 715.7h.01M1139.1 724.9h.01M1005.6 723.8h.01M1038.8 719.5h.01M1018.3 710.5h.01M1044.5 713.7h.01M1124.4 686.6h.01M1045.9 704.0h.01M1173.7 722.6h.01M961.0 718.2h.01M1059.1 721.7h.01M1074.5 711.3h.01M1198.2 716.6h.01M973.9 724.0h.01M888.3 725.6h.01M1034.1 724.6h.01M1078.3 724.8h.01M1131.3 719.9h.01M1001.2 718.8h.01M1030.0 726.3h.01M1183.1 714.2h.01M1193.9 724.3h.01M1143.8 724.5h.01M1100.5 725.8h.01M1014.4 722.1h.01M1113.4 725.5h.01M1218.5 717.4h.01M1158.6 724.2h.01M999.1 726.2h.01M1101.4 725.4h.01M978.9 725.4h.01M1205.1 724.4h.01M959.4 724.1h.01M1174.2 725.5h.01M1169.6 718.2h.01M1172.3 722.3h.01M912.2 726.0h.01M1151.3 717.8h.01M1162.7 724.0h.01M1012.9 724.6h.01M1186.5 725.1h.01M1152.0 726.0h.01M1075.3 723.0h.01M1162.9 712.3h.01M1140.2 723.8h.01M912.6 721.8h.01M1143.3 726.4h.01M1183.2 706.5h.01M1041.2 718.8h.01M1130.8 694.0h.01M1130.4 717.4h.01M1164.1 719.0h.01M906.7 722.9h.01M1058.5 722.0h.01M1052.1 723.8h.01M1024.4 714.2h.01M1195.8 713.5h.01M953.0 722.9h.01M1157.3 708.6h.01M1049.8 724.5h.01M1131.4 721.2h.01M947.5 722.4h.01M1055.6 702.2h.01M1134.3 708.9h.01M1106.9 709.0h.01M956.6 718.2h.01M1115.1 723.9h.01M937.4 720.6h.01M1152.2 713.0h.01M1004.1 721.9h.01M1163.9 715.1h.01M1165.8 726.4h.01M1123.2 717.0h.01M929.1 723.9h.01M1135.7 701.2h.01M930.6 723.1h.01M1171.4 725.2h.01M1197.7 723.6h.01M986.9 725.6h.01M991.0 723.2h.01M1146.8 692.0h.01M1103.5 688.2h.01M1062.7 714.4h.01M880.5 724.4h.01M900.3 725.9h.01M1175.1 725.3h.01M1020.2 720.1h.01M1093.5 726.1h.01M946.3 721.0h.01M1055.6 725.4h.01M1079.1 721.0h.01M975.7 726.1h.01M1101.4 686.1h.01M1166.5 725.2h.01M1097.8 721.0h.01M1117.1 722.8h.01M1065.9 718.0h.01M1047.0 717.6h.01M936.9 723.9h.01M1087.6 709.6h.01M1176.1 713.4h.01M1047.9 713.1h.01M983.3 720.9h.01M895.5 725.6h.01M973.6 724.1h.01M1155.5 726.2h.01M1213.0 721.0h.01M1183.7 701.9h.01M1069.4 704.3h.01M907.9 719.6h.01M1129.9 707.8h.01M963.1 726.1h.01M1092.8 715.1h.01M1141.2 724.0h.01M1106.3 683.2h.01M1003.4 714.8h.01M1215.8 723.2h.01M1060.0 719.5h.01M952.6 726.1h.01M1013.1 725.0h.01M1199.6 712.6h.01M1104.9 698.0h.01M1198.8 722.5h.01M1000.0 721.1h.01M1024.3 710.8h.01M912.5 721.8h.01M1033.7 721.1h.01M1098.7 676.2h.01M1214.9 722.3h.01M1105.1 723.7h.01M1169.7 719.5h.01M1162.2 697.7h.01M1122.8 711.7h.01M1100.6 724.7h.01M1073.0 725.8h.01M975.9 704.4h.01M1047.5 724.9h.01M1065.3 725.8h.01M1118.0 723.3h.01M990.2 720.3h.01M1149.0 715.6h.01M1081.7 720.0h.01M891.8 724.7h.01M1092.9 721.5h.01M1185.1 713.1h.01M1083.2 718.2h.01M1184.6 725.4h.01M993.0 726.4h.01M1083.1 719.3h.01M1214.4 723.5h.01M1084.5 725.2h.01M1159.7 718.1h.01M970.7 715.2h.01M912.4 725.5h.01M1078.7 722.4h.01M1008.3 715.0h.01M1032.8 700.6h.01M897.6 725.3h.01M1023.7 709.8h.01M942.5 721.1h.01M1196.2 715.1h.01M916.9 723.4h.01M990.5 725.7h.01M999.8 717.9h.01M1108.5 724.8h.01M1015.2 726.0h.01M1206.7 722.5h.01M1215.9 725.2h.01M1003.9 725.0h.01M1124.1 715.2h.01M1091.4 708.3h.01M1094.8 721.8h.01M1135.8 689.3h.01M916.5 723.4h.01M959.0 719.6h.01M1064.2 705.9h.01M1136.1 686.5h.01M1109.8 715.2h.01M1219.3 724.3h.01M943.1 714.1h.01M923.9 714.4h.01M1208.6 708.4h.01M1118.0 709.4h.01M1114.7 723.4h.01M931.5 720.0h.01M1070.6 725.0h.01M1103.7 722.7h.01M1006.8 711.5h.01M1121.2 709.3h.01M1177.3 721.0h.01M1070.5 720.0h.01M1039.9 710.7h.01M1195.5 717.8h.01M989.4 726.5h.01M1140.6 707.8h.01M1030.6 708.9h.01M1027.6 713.3h.01M1184.6 725.2h.01M1202.9 724.4h.01M1046.7 718.4h.01M1094.1 722.2h.01M922.0 721.8h.01M1149.8 711.6h.01M1052.9 705.2h.01M896.5 725.9h.01M897.2 722.9h.01M1092.8 723.3h.01M1093.6 726.5h.01M908.7 711.5h.01M1132.1 717.6h.01M1097.5 703.7h.01M1127.9 691.1h.01M1139.6 695.7h.01M949.0 718.0h.01M1027.1 703.2h.01M1170.3 691.0h.01M1160.3 720.8h.01M1093.0 707.8h.01M920.9 722.9h.01M1106.4 710.7h.01M1034.8 717.2h.01M1154.9 720.7h.01M1139.6 697.3h.01M1043.9 718.6h.01M1080.8 704.9h.01M1009.6 724.0h.01M1051.6 715.0h.01M965.2 706.6h.01M1086.7 710.7h.01M1058.1 726.2h.01M1049.3 717.3h.01M937.0 707.7h.01M1112.1 718.8h.01M904.2 725.2h.01M1033.1 716.2h.01M973.3 722.9h.01M1009.9 720.3h.01M1141.4 717.4h.01M1158.9 715.2h.01M933.8 721.4h.01M1080.7 709.6h.01M1186.3 717.8h.01M887.0 719.3h.01M1068.9 719.6h.01M1085.0 720.9h.01M994.9 719.1h.01M1123.8 725.8h.01M1009.8 706.4h.01M1014.2 723.7h.01M1109.4 720.7h.01M1212.3 725.7h.01M993.0 725.3h.01M1068.4 722.7h.01M1137.5 699.4h.01M927.8 726.4h.01M947.0 724.7h.01M956.6 723.7h.01M1042.0 712.8h.01M1217.4 723.5h.01M1128.5 724.7h.01M1119.0 699.6h.01M970.0 714.0h.01M1144.0 708.5h.01M925.7 722.0h.01M900.4 720.5h.01M1171.2 722.5h.01M884.3 721.2h.01M1042.8 722.3h.01M1175.9 692.4h.01M1042.5 723.9h.01M1067.7 722.2h.01M1151.8 676.7h.01M1076.2 703.9h.01M1054.2 720.5h.01M1173.3 690.5h.01M1160.3 712.5h.01M1180.1 703.3h.01M1050.0 726.4h.01M1094.0 721.1h.01M880.9 706.9h.01M1022.9 702.9h.01M895.4 724.6h.01M1168.2 714.6h.01M1137.1 718.1h.01M937.5 717.9h.01M1162.0 719.2h.01M1104.6 706.1h.01M1084.0 718.8h.01M1080.9 710.7h.01M1154.8 721.6h.01M1166.2 721.4h.01M1137.3 720.6h.01M1199.5 716.4h.01M1047.9 721.8h.01M1064.8 716.0h.01M907.3 722.9h.01M1197.4 712.4h.01M1150.1 709.0h.01M1060.9 725.1h.01M1187.6 716.1h.01M990.2 722.3h.01M1090.2 721.0h.01M1082.5 719.2h.01M1219.8 725.5h.01M1164.8 721.2h.01M1115.1 716.2h.01M1156.0 722.2h.01M1138.5 720.7h.01M1167.8 719.2h.01M1128.5 717.6h.01M886.3 717.2h.01M1093.4 713.7h.01M1181.0 706.4h.01M1049.4 715.9h.01M1152.3 704.6h.01M1041.7 720.8h.01M1043.0 722.1h.01M1057.9 705.6h.01M922.3 705.2h.01M1170.1 717.9h.01M1128.2 722.0h.01M1162.9 703.3h.01M1048.1 719.1h.01M990.7 724.7h.01M1186.9 721.6h.01M1127.7 723.9h.01M885.2 724.7h.01M1108.5 723.9h.01M1098.5 721.6h.01M1006.9 716.8h.01M1041.1 712.2h.01M1158.7 721.0h.01M906.0 718.1h.01M1101.4 715.7h.01M1140.7 716.6h.01M1056.4 700.2h.01M1198.5 726.4h.01M1122.8 719.9h.01M1108.1 704.3h.01M955.7 717.3h.01M1023.9 723.9h.01M909.4 726.0h.01M1008.8 720.9h.01M1016.4 722.7h.01M1127.6 721.0h.01M1136.2 724.5h.01M913.1 722.5h.01M1151.5 724.7h.01M915.5 721.4h.01M924.8 714.3h.01M1142.1 724.3h.01M1057.1 725.9h.01M935.8 724.4h.01M1193.7 716.4h.01M1126.8 715.5h.01M1089.1 713.6h.01M1084.7 720.4h.01M1182.7 723.3h.01M1055.9 714.0h.01M1064.7 720.7h.01M987.4 723.9h.01M1169.8 724.3h.01M1078.8 722.6h.01M1109.4 707.9h.01M948.6 723.2h.01M978.6 720.6h.01M1138.5 723.4h.01M995.1 724.2h.01M1030.1 705.3h.01M1192.8 722.8h.01M1072.4 723.9h.01M1073.3 691.5h.01M937.5 724.1h.01M981.7 715.7h.01M1020.8 720.8h.01M917.7 721.0h.01M1090.0 706.9h.01M1150.9 709.6h.01M1007.0 724.4h.01M1115.2 725.9h.01M1209.5 722.4h.01M1041.3 725.7h.01M1102.3 708.0h.01M949.5 726.0h.01M1140.7 718.6h.01M1170.4 721.0h.01M1221.4 724.5h.01M1096.9 715.5h.01M1070.2 706.9h.01M1146.3 705.2h.01M1003.4 721.7h.01M1099.0 715.6h.01M895.6 719.2h.01M1069.5 724.5h.01M1187.6 715.6h.01M1156.0 714.9h.01M1031.7 724.8h.01M1126.5 723.4h.01M903.9 725.8h.01M973.4 722.2h.01M1071.8 719.3h.01M892.7 723.3h.01M1003.6 725.8h.01M920.2 725.7h.01M1054.3 724.5h.01M1074.4 724.4h.01M1154.7 701.4h.01M1028.5 725.8h.01M1130.5 708.8h.01M1080.5 700.2h.01M962.3 720.0h.01M1201.6 714.1h.01M1065.8 718.4h.01M1185.9 724.0h.01M905.8 725.5h.01M959.4 713.3h.01M1023.4 722.7h.01M1065.0 725.2h.01M1042.6 722.9h.01M915.2 715.9h.01M929.6 719.1h.01M1114.5 722.3h.01M1182.0 721.5h.01M1211.3 723.7h.01M1142.3 710.2h.01M1131.9 726.2h.01M1141.4 708.6h.01M981.0 725.9h.01M925.8 722.8h.01M944.4 717.3h.01M1059.0 705.9h.01M1063.2 724.2h.01M1062.6 716.0h.01M1189.4 723.4h.01M900.7 721.6h.01M1141.2 713.5h.01M1173.6 709.5h.01M1123.4 705.0h.01M952.8 712.1h.01M1135.2 725.3h.01M971.0 721.0h.01M1022.4 702.3h.01M1012.8 721.3h.01M1086.8 692.6h.01M1021.6 707.2h.01M1151.4 716.1h.01M1211.9 718.4h.01M1099.6 725.9h.01M991.4 720.0h.01M949.2 721.4h.01M1036.4 721.5h.01M1178.9 709.2h.01M1158.2 719.6h.01M1096.8 697.3h.01M1118.1 725.5h.01M949.3 721.2h.01M982.1 718.3h.01M1141.0 724.2h.01M1201.9 719.5h.01M1221.4 723.1h.01M1179.4 700.5h.01M1143.7 725.4h.01M1045.0 713.5h.01M1042.8 724.6h.01M1072.1 724.7h.01M1077.8 725.3h.01M1152.3 723.6h.01M1125.0 713.6h.01M983.1 720.7h.01M1100.7 714.5h.01M977.6 722.8h.01M1182.5 718.0h.01M1000.0 723.9h.01M1078.9 718.0h.01M1063.8 726.5h.01M944.4 717.5h.01M1071.7 722.5h.01M1070.6 725.9h.01M932.7 718.1h.01M1161.5 724.0h.01M1026.3 725.8h.01M1026.5 719.8h.01M1159.6 718.4h.01M1185.7 719.5h.01M912.9 725.8h.01M1137.0 724.8h.01M919.5 721.0h.01M1102.5 715.2h.01M949.9 724.5h.01M1043.8 712.3h.01M1167.8 713.8h.01M975.9 723.0h.01M1037.1 716.7h.01M1142.3 718.8h.01M1094.6 703.9h.01M939.6 722.1h.01M1026.2 713.7h.01M1148.9 719.8h.01M964.2 719.0h.01M1145.0 716.1h.01M1157.7 691.6h.01M1000.3 718.9h.01M1174.5 723.4h.01M1218.9 718.3h.01M1044.3 720.0h.01M1112.1 706.1h.01M1059.3 701.0h.01M989.9 722.0h.01M961.3 725.6h.01M1017.0 726.1h.01M1106.9 714.4h.01M1052.6 709.0h.01M1099.7 712.1h.01M934.6 724.6h.01M899.2 725.7h.01M1186.2 719.0h.01M1046.7 714.5h.01M1192.1 701.6h.01M1012.5 723.4h.01M1093.0 703.6h.01M941.1 715.8h.01M1136.3 715.3h.01M1056.3 721.2h.01M1055.9 712.6h.01M1067.8 712.2h.01M897.6 713.9h.01M980.9 716.8h.01M1055.6 723.7h.01M892.7 724.1h.01M1115.8 725.8h.01M892.1 725.1h.01M1194.6 724.4h.01M1055.1 720.6h.01M1147.2 722.3h.01M1039.2 719.2h.01M997.6 722.9h.01M1158.2 718.3h.01M919.8 724.5h.01M1107.1 723.2h.01M1050.0 717.6h.01M1042.3 724.4h.01M1102.2 716.7h.01M1057.1 715.6h.01M1195.3 726.1h.01M983.4 714.1h.01M1115.5 709.0h.01M1050.6 722.3h.01M1142.0 716.0h.01M1035.1 714.7h.01M1201.5 716.3h.01M945.9 721.5h.01M1030.4 715.2h.01M1019.3 724.8h.01M1009.3 716.9h.01M1148.3 696.0h.01M1058.5 725.7h.01M1175.1 723.5h.01M1149.9 718.1h.01M1068.2 726.1h.01M993.7 717.9h.01M1073.2 701.7h.01M1174.6 718.8h.01M1054.3 718.1h.01M918.7 717.0h.01M963.3 722.1h.01M1010.0 722.9h.01M1075.0 722.5h.01M972.1 720.5h.01M1123.6 725.4h.01M992.3 724.4h.01M1042.3 719.4h.01M1108.2 714.3h.01M1005.1 723.4h.01M1068.5 701.5h.01M1166.3 719.4h.01M926.6 724.4h.01M1177.3 721.0h.01M1051.0 715.4h.01M911.2 721.7h.01M1140.7 725.0h.01M1059.6 704.9h.01M1006.8 721.1h.01M1036.0 718.4h.01M1051.1 721.9h.01M1206.3 721.2h.01M1075.3 721.2h.01M1190.9 717.8h.01M974.4 722.2h.01M1009.5 708.3h.01M1043.0 694.1h.01M1106.0 721.3h.01M1101.3 693.1h.01M1142.9 704.8h.01M1105.9 714.5h.01M959.2 717.6h.01M1127.6 713.4h.01M1021.6 714.0h.01M1094.1 721.7h.01M1138.8 703.6h.01M1143.7 720.4h.01M1214.4 720.1h.01M1065.3 718.6h.01M914.2 716.3h.01M1181.1 718.3h.01M1075.1 707.5h.01M899.3 724.2h.01M1002.6 720.2h.01M1038.8 716.8h.01M1199.0 725.7h.01M893.4 718.7h.01M1075.9 719.7h.01M904.9 726.0h.01M881.3 717.6h.01M915.1 724.7h.01M1077.4 716.5h.01M992.0 720.1h.01M1127.4 674.2h.01M938.6 724.8h.01M942.8 724.8h.01M988.6 726.3h.01M1174.7 723.3h.01M1157.4 706.7h.01M1171.7 726.2h.01M1111.9 702.7h.01M1125.3 714.9h.01M1062.3 707.1h.01M1096.0 721.1h.01M1084.5 718.9h.01M978.5 720.1h.01M1182.0 717.0h.01M891.3 724.3h.01M1163.4 724.9h.01M1087.4 712.6h.01M1096.2 721.5h.01M896.3 721.2h.01M970.1 721.6h.01M1093.2 710.7h.01M947.0 708.7h.01M1158.3 702.4h.01M977.4 719.3h.01M1046.9 713.6h.01M1144.3 719.9h.01M1075.5 711.8h.01M964.0 714.9h.01M1031.4 705.4h.01M961.3 725.8h.01M1113.1 723.1h.01M1066.9 724.0h.01M1151.6 710.0h.01M1140.9 724.7h.01M915.0 722.5h.01M932.7 720.5h.01M1100.1 692.8h.01M1177.6 716.3h.01M1180.2 720.0h.01M1017.0 726.0h.01M1145.8 712.8h.01M1125.4 717.5h.01M1071.7 697.4h.01M1046.3 724.9h.01M1213.3 713.4h.01M965.7 723.0h.01M1082.7 720.7h.01M1168.9 723.4h.01M1014.6 712.4h.01M996.4 718.3h.01M1011.0 722.5h.01M1076.3 723.2h.01M1179.0 699.9h.01M902.2 723.9h.01M1156.1 717.1h.01M1215.7 720.1h.01M1006.4 722.8h.01M924.6 724.1h.01M1159.2 722.1h.01M977.6 722.1h.01M1198.7 725.7h.01M1064.3 723.6h.01M1176.0 721.2h.01M1068.1 702.5h.01M1019.2 721.5h.01M1097.8 713.5h.01M1032.3 716.9h.01M1061.0 706.6h.01M1103.0 710.3h.01M1107.9 711.6h.01M1050.8 724.8h.01M1042.0 722.3h.01M894.4 720.1h.01M1093.3 718.5h.01M1146.1 725.6h.01M953.0 720.3h.01M911.4 717.2h.01M1088.2 685.2h.01M1188.8 723.2h.01M1065.0 709.9h.01M1073.8 711.7h.01M1089.9 710.0h.01M1083.9 716.1h.01M1060.6 695.9h.01M1103.6 725.1h.01M1105.6 693.4h.01M999.5 716.8h.01M1004.0 717.9h.01M1013.9 719.4h.01M1165.8 726.1h.01M1183.6 720.0h.01M1000.2 724.1h.01M1102.3 709.6h.01M974.8 726.1h.01M995.4 720.1h.01M1055.0 710.7h.01M1152.4 720.9h.01M1112.8 724.5h.01M1118.6 713.5h.01M997.3 719.5h.01M958.6 708.7h.01M1100.3 694.6h.01M1135.8 723.5h.01M1153.9 715.0h.01M1047.0 713.8h.01M1161.7 713.6h.01M990.4 705.8h.01M1202.3 709.5h.01M980.0 724.9h.01M1082.5 724.6h.01M997.6 718.1h.01M897.5 722.3h.01M1056.6 712.8h.01M1005.5 721.9h.01M988.5 726.4h.01M1190.2 723.8h.01M1098.3 724.6h.01M1057.8 703.4h.01M1179.4 710.6h.01M917.9 725.9h.01M1130.6 716.6h.01M1043.9 713.3h.01M991.1 720.7h.01M1059.6 724.8h.01M1166.0 724.3h.01M1172.7 711.9h.01M1065.9 719.6h.01M985.4 725.6h.01M1143.7 720.7h.01M1104.8 720.8h.01M1008.2 725.2h.01M1162.3 720.1h.01M964.5 715.8h.01M965.1 725.1h.01M966.4 722.2h.01M1166.5 726.2h.01M1206.3 715.4h.01M1061.1 720.1h.01M938.7 725.0h.01M1191.9 709.3h.01M1181.8 703.8h.01M959.4 723.8h.01M1181.9 723.2h.01M1000.4 726.4h.01M1096.0 716.6h.01M988.0 724.7h.01M1125.5 724.1h.01M1168.8 704.7h.01M1060.6 724.9h.01M1107.2 722.1h.01M943.8 720.5h.01M1103.8 722.5h.01M1001.3 718.0h.01M1111.6 723.4h.01M1074.9 716.4h.01M1022.1 718.4h.01M1098.6 725.9h.01M950.0 723.9h.01M962.4 722.5h.01M1113.9 714.2h.01M1195.8 716.2h.01M948.5 716.4h.01M1207.6 715.7h.01M1101.0 719.4h.01M967.7 723.0h.01M1148.6 706.7h.01M1198.1 706.8h.01M1044.8 726.3h.01M1062.5 717.7h.01M1165.2 723.6h.01M901.9 720.7h.01M980.1 715.5h.01M1105.8 724.7h.01M1092.2 708.4h.01M992.6 707.1h.01M920.1 725.7h.01M1114.3 712.4h.01M1116.5 694.4h.01M984.0 726.2h.01M1097.2 721.1h.01M1052.8 721.0h.01M1195.0 718.3h.01M1106.2 722.3h.01M1020.5 724.7h.01M1145.0 711.7h.01M1042.5 725.2h.01M1114.5 721.4h.01M1101.1 713.2h.01M882.5 726.3h.01M1177.9 707.1h.01M935.6 725.3h.01M1062.5 706.4h.01M1023.4 698.8h.01M937.3 715.2h.01M920.3 722.2h.01M1218.6 713.2h.01M1037.9 694.5h.01M1164.9 699.0h.01M988.8 723.5h.01M1164.5 717.1h.01M1204.4 722.7h.01M970.5 724.8h.01M1193.0 709.9h.01M1173.5 717.9h.01M1020.9 726.5h.01M949.6 717.8h.01M1215.2 724.6h.01M1043.4 701.1h.01M1178.0 715.7h.01M1015.3 725.6h.01M976.8 724.8h.01M980.3 721.6h.01M1025.3 724.3h.01M1193.6 726.5h.01M890.5 723.1h.01M904.7 722.8h.01M902.1 723.6h.01M1121.4 716.8h.01M989.7 715.4h.01M1218.8 712.0h.01M1099.0 719.8h.01M1169.0 724.5h.01M993.6 722.7h.01M1099.3 715.8h.01M885.4 724.5h.01M1091.5 715.3h.01M1183.3 723.0h.01M1118.0 688.4h.01M1033.5 716.2h.01M1153.4 712.6h.01M1137.7 720.4h.01M1149.3 721.1h.01M995.9 725.8h.01M1102.0 724.2h.01M1013.9 723.7h.01M1044.8 720.8h.01M1100.7 720.1h.01M1100.3 705.5h.01M1092.7 717.7h.01M1037.8 724.4h.01M988.5 725.9h.01M1014.8 726.2h.01M1059.1 717.0h.01M948.2 719.6h.01M1070.7 715.2h.01M1063.8 708.6h.01M1139.0 724.9h.01M1100.6 722.7h.01M1157.9 721.1h.01M992.7 726.3h.01M1002.8 708.4h.01M917.1 724.0h.01M1064.6 713.6h.01M1167.8 687.2h.01M1026.8 725.7h.01M989.4 726.5h.01M1009.3 719.3h.01M1008.9 710.2h.01M1112.1 720.1h.01M928.1 726.2h.01M990.1 720.6h.01M920.9 723.2h.01M1177.6 726.5h.01M1015.8 722.2h.01M1118.8 709.9h.01M1138.7 719.4h.01M1033.4 716.8h.01M1073.2 695.8h.01M1094.7 715.6h.01M1135.1 718.3h.01M1083.3 713.5h.01M1115.8 716.8h.01M1084.0 682.6h.01M1176.7 718.6h.01M1021.8 724.8h.01M1059.2 720.3h.01M1064.5 723.2h.01M1079.7 716.4h.01M942.5 721.3h.01M1147.6 723.8h.01M1001.9 726.2h.01M1076.9 713.3h.01M1057.9 716.6h.01M1117.4 725.9h.01M918.6 723.2h.01M1206.3 722.8h.01M1005.9 725.5h.01M1129.4 708.4h.01M1051.7 725.5h.01M1012.1 717.0h.01M1164.7 720.9h.01M1196.3 726.3h.01M985.3 713.4h.01M1146.4 725.4h.01M1015.4 722.5h.01M1079.9 726.2h.01M1205.5 724.6h.01M905.9 722.6h.01M1208.4 714.5h.01M1192.6 726.1h.01M1024.1 718.7h.01M1059.2 723.8h.01M925.9 717.0h.01M1135.4 722.1h.01M1076.4 702.4h.01M960.9 721.5h.01M996.1 711.6h.01M1172.8 696.3h.01M1048.4 718.9h.01M1027.7 722.5h.01M1213.8 714.8h.01M1082.5 713.6h.01M1201.8 710.1h.01M1171.9 723.1h.01M1040.7 714.2h.01M969.2 724.9h.01M981.0 725.8h.01M1201.9 715.3h.01M1086.9 710.0h.01M1141.1 719.2h.01M1092.0 724.8h.01M1139.3 427.3h.01M1146.9 523.3h.01M1247.3 538.9h.01M1093.1 550.7h.01M1059.0 595.7h.01M1092.7 596.3h.01M1287.5 604.1h.01M1202.7 627.4h.01M1159.0 631.9h.01M1045.4 622.3h.01M1037.3 629.8h.01M1065.1 640.6h.01M1052.1 647.7h.01M1059.6 653.8h.01M1105.9 650.7h.01M1110.3 655.8h.01M1117.4 657.8h.01M1110.3 660.9h.01M1116.4 662.9h.01M1101.2 662.9h.01M1087.4 660.5h.01M1084.5 666.0h.01M1074.4 664.3h.01M1028.5 666.0h.01M1135.7 661.5h.01M1142.2 661.5h.01M1154.4 660.3h.01M1171.6 660.3h.01M1176.3 666.0h.01M1183.0 667.4h.01M1192.1 668.6h.01M1142.2 670.4h.01M1129.6 670.0h.01M1134.7 673.5h.01M1154.4 673.1h.01M1155.6 676.1h.01M1058.6 672.1h.01M1068.1 673.5h.01M1073.8 676.1h.01M1082.3 677.1h.01M1102.6 674.1h.01M1103.8 677.5h.01M1112.3 680.2h.01M1123.5 678.1h.01M1120.9 681.2h.01M1178.3 678.1h.01M1162.1 679.6h.01M1166.5 682.2h.01M1204.1 679.8h.01M1201.2 684.8h.01M1210.8 687.7h.01M1211.8 692.3h.01M1211.8 696.4h.01M1229.5 691.9h.01M1246.3 686.7h.01M1277.4 629.8h.01M1282.4 639.6h.01M1306.8 631.1h.01M1276.1 664.9h.01M1274.7 668.6h.01M1265.6 671.6h.01M1261.5 673.5h.01M1261.9 683.2h.01M1268.0 684.2h.01M1293.4 682.6h.01M1278.8 690.9h.01M1284.5 691.3h.01M1261.5 702.5h.01M1283.9 700.9h.01M1300.5 704.9h.01M1227.0 704.9h.01M1238.2 708.6h.01M1233.1 711.2h.01M1230.1 714.7h.01M1238.8 717.3h.01M1247.3 710.6h.01M1251.4 713.7h.01M1259.1 714.1h.01M1268.6 717.7h.01M1264.6 720.8h.01M1257.1 723.4h.01M1299.7 716.1h.01M1303.7 719.7h.01M1297.6 723.2h.01M1313.3 721.2h.01M1227.0 722.4h.01M1219.9 717.7h.01M1325.0 523.2h.01M1356.0 522.6h.01M1413.3 542.1h.01M1397.8 572.5h.01M1325.6 604.1h.01M1345.2 619.9h.01M1306.4 631.4h.01M1293.1 682.8h.01M1387.0 681.9h.01M1300.2 705.1h.01M1335.9 705.8h.01M1334.3 717.8h.01M1373.0 721.3h.01M1442.8 711.3h.01M1458.3 723.1h.01M1241.0 722.0h.01M1249.0 724.0h.01M1283.0 721.0h.01M1290.0 724.0h.01M1014.0 642.6h.01M1008.3 643.6h.01M996.7 645.7h.01M989.6 648.3h.01M1001.8 658.3h.01M983.6 659.5h.01M991.7 665.4h.01M989.2 671.0h.01M980.5 670.0h.01M976.5 675.1h.01M970.4 666.6h.01M1017.7 663.3h.01M1028.6 666.0h.01M1005.9 677.1h.01M1013.0 676.7h.01M987.2 681.6h.01M992.7 685.6h.01M1022.1 681.2h.01M1017.7 683.6h.01M952.1 673.1h.01M936.3 682.2h.01M938.9 687.3h.01M951.1 688.3h.01M967.3 687.3h.01M964.3 690.3h.01M963.3 697.8h.01M961.2 701.5h.01M936.3 695.4h.01M925.7 694.4h.01M920.6 699.5h.01M1030.2 687.3h.01M1024.1 691.3h.01M1028.2 695.4h.01M985.6 700.5h.01M991.7 699.9h.01M951.1 705.5h.01M914.5 704.5h.01M875.4 699.0h.01M883.1 699.0h.01M890.2 698.8h.01" stroke="#ff0000" stroke-width="7" stroke-linecap="round" fill="none"/>
  <path d="M762.3 733.3h.01M802.5 733.4h.01M826.0 733.8h.01M842.7 733.5h.01M842.7 727.5h.01M855.7 733.5h.01M855.7 729.0h.01M866.3 735.0h.01M866.3 730.0h.01M875.2 730.6h.01M875.2 729.6h.01M875.2 732.4h.01M875.2 729.2h.01M875.2 731.8h.01M875.2 730.8h.01M875.2 729.1h.01M875.2 731.6h.01M875.2 729.0h.01M883.0 729.5h.01M883.0 730.5h.01M883.0 733.4h.01M883.0 729.8h.01M883.0 732.1h.01M883.0 732.4h.01M883.0 730.9h.01M883.0 731.9h.01M883.0 729.2h.01M889.8 734.3h.01M889.8 729.5h.01M889.8 731.2h.01M889.8 733.1h.01M889.8 729.7h.01M889.8 731.6h.01M889.8 729.0h.01M889.8 732.6h.01M895.9 733.5h.01M895.9 730.4h.01M895.9 731.0h.01M895.9 732.6h.01M895.9 728.9h.01M895.9 731.4h.01M895.9 729.8h.01M895.9 729.5h.01M901.4 734.3h.01M901.4 729.7h.01M901.4 729.8h.01M901.4 730.1h.01M901.4 730.1h.01M901.4 731.6h.01M901.4 732.2h.01M901.4 730.3h.01M906.5 731.1h.01M906.5 731.2h.01M906.5 729.4h.01M906.5 732.6h.01M906.5 729.2h.01M906.5 729.2h.01M906.5 730.0h.01M906.5 729.8h.01M911.1 734.0h.01M911.1 734.9h.01M911.1 731.7h.01M911.1 731.8h.01M911.1 729.3h.01M911.1 729.4h.01M911.1 730.9h.01M911.1 730.4h.01M915.4 729.9h.01M915.4 733.7h.01M915.4 732.2h.01M915.4 733.7h.01M915.4 730.9h.01M915.4 730.2h.01M915.4 733.9h.01M915.4 735.0h.01M919.4 734.9h.01M919.4 735.2h.01M919.4 735.0h.01M919.4 731.2h.01M919.4 730.2h.01M919.4 730.3h.01M919.4 730.1h.01M919.4 730.1h.01M923.2 731.0h.01M923.2 734.1h.01M923.2 735.3h.01M923.2 731.4h.01M923.2 731.5h.01M923.2 735.1h.01M923.2 733.6h.01M923.2 729.9h.01M926.7 732.4h.01M926.7 735.2h.01M926.7 731.8h.01M926.7 734.7h.01M926.7 734.4h.01M926.7 730.2h.01M926.7 730.5h.01M930.0 732.5h.01M930.0 732.4h.01M930.0 728.9h.01M930.0 731.9h.01M930.0 730.1h.01M930.0 728.8h.01M930.0 734.4h.01M933.1 732.8h.01M933.1 734.2h.01M933.1 735.3h.01M933.1 731.9h.01M933.1 733.1h.01M933.1 732.4h.01M933.1 732.4h.01M936.1 732.0h.01M936.1 729.3h.01M936.1 730.5h.01M936.1 729.3h.01M936.1 733.6h.01M936.1 734.4h.01M936.1 735.3h.01M938.9 732.6h.01M938.9 731.3h.01M938.9 730.2h.01M938.9 731.1h.01M938.9 734.1h.01M938.9 728.9h.01M938.9 732.9h.01M941.6 734.6h.01M941.6 730.8h.01M941.6 729.8h.01M941.6 731.9h.01M941.6 735.6h.01M941.6 734.9h.01M941.6 730.7h.01M944.2 729.4h.01M944.2 735.3h.01M944.2 729.3h.01M944.2 735.3h.01M944.2 732.2h.01M944.2 731.4h.01M944.2 733.0h.01M946.7 731.0h.01M946.7 732.6h.01M946.7 730.2h.01M946.7 731.5h.01M946.7 728.9h.01M946.7 730.7h.01M946.7 728.9h.01M949.1 734.1h.01M949.1 736.4h.01M949.1 731.5h.01M949.1 735.2h.01M949.1 734.3h.01M949.1 733.7h.01M951.3 731.0h.01M951.3 730.7h.01M951.3 731.1h.01M951.3 732.4h.01M951.3 730.0h.01M951.3 732.3h.01M953.5 730.4h.01M953.5 732.8h.01M953.5 728.8h.01M953.5 730.9h.01M953.5 729.5h.01M953.5 732.0h.01M955.6 736.7h.01M955.6 730.0h.01M955.6 734.6h.01M955.6 734.0h.01M955.6 729.2h.01M955.6 735.5h.01M957.7 734.3h.01M957.7 734.4h.01M957.7 730.7h.01M957.7 729.1h.01M957.7 729.9h.01M957.7 731.7h.01M959.6 734.2h.01M959.6 729.3h.01M959.6 734.8h.01M959.6 730.9h.01M959.6 729.4h.01M959.6 731.0h.01M961.5 730.0h.01M961.5 730.9h.01M961.5 735.0h.01M961.5 731.3h.01M961.5 733.5h.01M961.5 728.9h.01M963.4 736.4h.01M963.4 730.5h.01M963.4 737.1h.01M963.4 736.7h.01M963.4 728.9h.01M963.4 732.7h.01M965.2 737.0h.01M965.2 729.9h.01M965.2 735.9h.01M965.2 733.2h.01M965.2 736.4h.01M966.9 731.8h.01M966.9 731.6h.01M966.9 736.2h.01M966.9 728.8h.01M966.9 735.4h.01M968.6 732.0h.01M968.6 732.6h.01M968.6 731.2h.01M968.6 729.2h.01M968.6 729.7h.01M970.2 736.1h.01M970.2 734.5h.01M970.2 737.0h.01M970.2 737.3h.01M970.2 733.8h.01M971.8 733.1h.01M971.8 731.9h.01M971.8 731.5h.01M971.8 735.6h.01M971.8 737.7h.01M973.4 730.8h.01M973.4 737.2h.01M973.4 738.1h.01M973.4 733.0h.01M973.4 730.1h.01M974.9 732.7h.01M974.9 733.7h.01M974.9 732.3h.01M974.9 732.0h.01M974.9 729.4h.01M976.3 733.0h.01M976.3 737.9h.01M976.3 736.9h.01M976.3 737.1h.01M976.3 729.0h.01M977.8 738.2h.01M977.8 731.2h.01M977.8 729.9h.01M977.8 730.3h.01M979.2 729.2h.01M979.2 736.4h.01M979.2 731.1h.01M979.2 737.8h.01M980.5 734.0h.01M980.5 734.6h.01M980.5 732.6h.01M980.5 731.0h.01M981.9 731.1h.01M981.9 731.3h.01M981.9 738.4h.01M981.9 735.8h.01M983.2 731.1h.01M983.2 729.1h.01M983.2 732.2h.01M983.2 733.0h.01M984.4 737.2h.01M984.4 731.2h.01M984.4 731.1h.01M984.4 736.5h.01M985.7 730.3h.01M985.7 732.8h.01M985.7 731.0h.01M985.7 738.8h.01M986.9 738.5h.01M986.9 732.2h.01M986.9 730.7h.01M986.9 738.5h.01M988.1 731.7h.01M988.1 732.5h.01M988.1 738.8h.01M989.3 733.8h.01M989.3 732.7h.01M989.3 738.5h.01M990.4 729.2h.01M990.4 729.5h.01M990.4 738.6h.01M991.6 735.4h.01M991.6 731.6h.01M991.6 736.5h.01M992.7 739.0h.01M992.7 729.1h.01M992.7 731.3h.01M993.7 734.2h.01M993.7 739.0h.01M993.7 730.8h.01M994.8 732.3h.01M994.8 732.8h.01M994.8 737.4h.01M995.9 734.9h.01M995.9 732.4h.01M995.9 739.7h.01M996.9 736.7h.01M996.9 733.8h.01M997.9 736.3h.01M997.9 730.2h.01M998.9 731.6h.01M998.9 731.6h.01M1082.2 732.9h.01M1173.6 742.5h.01M1225.5 731.0h.01M1071.8 742.6h.01M1182.9 748.0h.01M906.7 730.6h.01M943.5 730.2h.01M1220.5 741.4h.01M1208.4 736.7h.01M1190.2 738.3h.01M998.4 737.6h.01M1212.8 731.1h.01M1110.1 740.6h.01M982.7 732.5h.01M952.8 730.4h.01M996.6 735.5h.01M1127.1 732.8h.01M889.7 730.6h.01M1135.1 732.5h.01M1017.1 731.4h.01M1169.7 740.3h.01M918.2 729.5h.01M1045.6 737.1h.01M1123.3 730.6h.01M961.8 734.6h.01M1050.5 733.2h.01M1015.5 740.9h.01M1017.2 736.1h.01M1032.7 734.7h.01M1189.7 749.8h.01M1035.0 731.6h.01M1150.0 733.0h.01M885.7 733.9h.01M1055.1 741.7h.01M1049.3 742.3h.01M1067.3 731.5h.01M892.0 731.9h.01M1123.7 746.7h.01M930.3 733.1h.01M1037.4 736.1h.01M954.6 731.1h.01M1086.6 745.3h.01M939.0 732.4h.01M1172.5 749.0h.01M975.0 730.0h.01M1212.1 749.7h.01M1074.3 729.7h.01M1207.3 737.1h.01M1201.1 742.0h.01M1178.2 732.2h.01M1167.0 733.4h.01M1048.7 741.7h.01M1179.6 732.6h.01M982.9 732.8h.01M1085.6 735.6h.01M945.1 730.7h.01M1149.0 747.3h.01M907.1 732.2h.01M1158.7 729.6h.01M1182.2 731.3h.01M1111.1 739.3h.01M1119.6 734.8h.01M1053.9 737.9h.01M1055.7 739.2h.01M1062.7 735.9h.01M897.2 732.3h.01M1076.5 732.8h.01M1160.5 745.0h.01M1066.4 731.8h.01M1071.3 730.6h.01M947.4 732.1h.01M931.5 731.9h.01M1083.1 729.5h.01M1122.4 730.4h.01M1151.6 744.9h.01M1083.5 729.8h.01M1081.1 735.4h.01M1214.3 731.7h.01M1187.6 749.8h.01M1151.2 745.7h.01M973.6 737.9h.01M1077.3 745.2h.01M1204.4 732.3h.01M1167.7 748.2h.01M919.3 731.1h.01M1158.3 732.1h.01M1198.9 734.6h.01M1175.6 731.8h.01M1080.6 744.8h.01M979.2 731.4h.01M1081.8 734.4h.01M904.8 729.9h.01M960.8 736.5h.01M1135.5 746.8h.01M963.8 735.5h.01M941.7 732.7h.01M1122.4 735.9h.01M1192.2 740.5h.01M1105.1 745.5h.01M937.2 736.0h.01M1120.4 736.5h.01M1170.4 734.3h.01M1225.4 741.3h.01M1033.8 739.7h.01M1061.2 731.6h.01M1154.6 729.8h.01M1176.9 734.1h.01M1123.3 748.1h.01M1106.9 741.4h.01M1017.3 728.8h.01M903.2 729.7h.01M1116.2 737.2h.01M1083.9 744.6h.01M948.9 730.6h.01M1127.5 729.2h.01M883.0 730.8h.01M937.9 731.4h.01M985.2 734.8h.01M1107.9 732.7h.01M1118.6 738.0h.01M950.0 736.1h.01M992.4 730.4h.01M933.3 733.3h.01M1191.7 745.3h.01M1047.8 732.8h.01M889.8 732.4h.01M1099.6 735.3h.01M1125.2 737.5h.01M1210.4 744.5h.01M994.2 738.7h.01M908.6 732.0h.01M1049.2 732.4h.01M915.9 733.8h.01M890.3 731.9h.01M1211.5 731.8h.01M975.8 734.6h.01M1082.1 740.0h.01M1175.0 732.5h.01M1016.1 732.6h.01M910.9 734.3h.01M1166.1 743.7h.01M886.1 733.5h.01M1155.0 738.5h.01M1154.0 738.2h.01M985.9 729.9h.01M988.2 729.2h.01M1025.3 738.9h.01M1140.1 746.0h.01M1145.1 734.3h.01M1096.9 736.9h.01M1167.7 739.7h.01M1000.4 736.2h.01M1218.3 733.5h.01M1194.2 729.1h.01M998.6 731.5h.01M1154.7 748.4h.01M1155.3 735.6h.01M1194.2 735.7h.01M990.8 738.5h.01M1120.7 742.3h.01M1131.2 748.3h.01M1070.1 742.8h.01M1140.9 746.2h.01M1059.5 740.4h.01M1102.1 734.6h.01M980.6 734.9h.01M925.1 734.9h.01M954.1 729.0h.01M938.1 735.6h.01M1028.5 730.8h.01M900.3 729.0h.01M1139.4 741.7h.01M1140.7 743.8h.01M919.4 732.6h.01M1034.8 740.5h.01M1176.8 747.5h.01M919.5 734.5h.01M1204.0 748.9h.01M938.3 730.3h.01M940.4 729.1h.01M1184.9 745.9h.01M1121.7 744.9h.01M1120.9 734.4h.01M935.1 729.5h.01M1158.6 733.1h.01M1019.6 734.3h.01M895.8 730.3h.01M1006.6 737.4h.01M1036.4 733.4h.01M1217.9 739.6h.01M1186.0 741.8h.01M901.6 731.2h.01M1059.3 741.2h.01M1029.2 738.5h.01M1091.9 732.7h.01M1189.1 730.7h.01M1176.9 732.4h.01M881.7 729.9h.01M1160.0 749.1h.01M884.5 731.5h.01M1077.1 742.5h.01M970.0 733.3h.01M1029.3 740.3h.01M998.7 739.5h.01M1007.0 731.4h.01M1141.5 738.9h.01M939.5 733.5h.01M926.5 734.2h.01M1140.8 744.8h.01M1119.8 735.7h.01M1047.6 734.8h.01M1197.1 730.6h.01M1196.6 729.3h.01M978.4 731.4h.01M1200.2 739.4h.01M1040.2 741.8h.01M988.7 733.7h.01M1089.9 742.4h.01M1157.3 742.2h.01M1029.7 733.3h.01M958.4 735.7h.01M1130.2 743.6h.01M964.1 732.5h.01M1163.3 740.9h.01M946.4 732.3h.01M1195.6 733.8h.01M972.8 731.6h.01M1142.6 746.0h.01M958.2 730.1h.01M993.9 732.4h.01M1086.9 731.7h.01M1022.7 731.3h.01M1221.1 744.5h.01M935.9 735.7h.01M935.9 731.6h.01M1223.5 746.0h.01M1151.5 737.8h.01M974.6 734.8h.01M938.2 730.3h.01M1043.3 729.3h.01M1046.9 740.8h.01M1139.6 739.0h.01M1121.2 737.9h.01M952.9 733.6h.01M1048.8 740.1h.01M1202.1 737.9h.01M1103.2 742.9h.01M1054.2 732.4h.01M1148.2 747.0h.01M1163.5 743.4h.01M1186.3 743.1h.01M1124.0 737.7h.01M1017.4 736.9h.01M934.2 731.8h.01M1166.0 743.7h.01M1120.3 733.7h.01M1055.0 735.9h.01M1117.9 736.7h.01M1134.2 747.5h.01M969.5 734.7h.01M1164.7 736.9h.01M1076.6 745.5h.01M905.5 732.0h.01M960.7 735.3h.01M1211.4 739.9h.01M935.6 732.9h.01M1092.9 741.9h.01M1083.8 740.1h.01M1179.5 739.8h.01M1050.6 743.4h.01M979.9 735.5h.01M1044.7 740.2h.01M944.8 736.3h.01M1032.1 729.6h.01M1003.7 733.5h.01M891.0 731.2h.01M1054.0 739.7h.01M1031.0 732.5h.01M985.3 736.4h.01M1211.2 740.1h.01M983.2 736.9h.01M1044.5 732.0h.01M947.7 734.8h.01M1173.9 742.1h.01M1069.9 738.2h.01M985.9 738.7h.01M1031.3 737.7h.01M1176.5 745.9h.01M1069.6 733.7h.01M1095.2 731.1h.01M1180.9 736.3h.01M1185.8 734.4h.01M1039.2 732.5h.01M1055.9 731.7h.01M883.1 732.8h.01M1006.1 731.7h.01M1013.5 734.8h.01M1056.7 738.9h.01M1129.4 736.0h.01M1208.0 747.0h.01M915.2 734.0h.01M1201.5 745.4h.01M952.4 735.4h.01M1121.4 729.1h.01M889.8 734.2h.01M1128.4 733.8h.01M935.8 729.8h.01M988.7 737.0h.01M1029.0 730.9h.01M1201.0 745.6h.01M963.5 736.4h.01M1113.8 743.8h.01M1132.1 746.7h.01M1167.6 746.3h.01M975.0 735.3h.01M1089.7 742.2h.01M1060.0 743.0h.01M1097.3 733.7h.01M988.9 730.3h.01M1077.7 729.8h.01M1069.3 731.2h.01M1077.1 737.4h.01M1092.4 744.5h.01M886.3 733.5h.01M1069.6 738.2h.01M1131.2 745.6h.01M1038.8 734.9h.01M1217.0 730.4h.01M1122.6 741.3h.01M900.2 732.3h.01M1136.4 747.6h.01M1023.5 741.9h.01M1083.3 737.3h.01M1199.2 729.5h.01M1147.0 741.7h.01M1026.3 740.5h.01M1035.8 735.6h.01M1088.0 742.6h.01M980.1 733.1h.01M1054.6 737.5h.01M1178.9 734.9h.01M1179.2 737.3h.01M1081.1 733.5h.01M1081.9 745.9h.01M1127.9 744.5h.01M1023.7 733.0h.01M1012.5 736.1h.01M1121.9 744.2h.01M906.5 733.1h.01M1195.8 740.3h.01M911.5 730.7h.01M886.0 729.9h.01M1205.9 741.8h.01M1129.0 744.5h.01M1202.7 741.8h.01M1116.4 740.9h.01M1140.5 740.9h.01M1135.9 733.1h.01M1131.7 737.9h.01M1160.2 730.9h.01M968.8 729.1h.01M1163.7 747.8h.01M1128.3 736.1h.01M1177.7 745.3h.01M1099.5 733.6h.01M1013.5 734.1h.01M1019.3 734.4h.01M1124.1 747.2h.01M914.0 732.4h.01M906.2 729.5h.01M1174.1 740.8h.01M1205.2 738.3h.01M891.5 731.0h.01M1108.8 746.7h.01M1222.6 739.1h.01M1051.3 730.4h.01M1124.9 733.0h.01M957.0 728.9h.01M884.8 732.6h.01M944.5 736.1h.01M929.9 734.8h.01M947.6 728.9h.01M1147.4 733.8h.01M1151.6 732.7h.01M911.7 733.6h.01M1145.7 746.4h.01M1150.5 730.5h.01M1120.0 742.6h.01M1067.2 744.2h.01M996.3 739.6h.01M1146.7 729.0h.01M891.9 732.5h.01M1176.1 730.5h.01M1016.7 738.1h.01M962.7 736.1h.01M1075.5 729.8h.01M1036.3 737.1h.01M1060.0 739.7h.01M954.2 735.1h.01M1034.8 738.0h.01M1120.4 737.0h.01M1042.4 740.5h.01M1212.6 745.6h.01M1101.0 734.3h.01M917.0 735.0h.01M1142.6 745.7h.01M1024.1 736.9h.01M1221.7 746.7h.01M1111.6 734.7h.01M1056.7 742.8h.01M1039.4 738.8h.01M1111.8 746.0h.01M1173.3 734.7h.01M882.1 730.3h.01M1054.7 738.0h.01M1175.8 747.4h.01M907.7 733.8h.01M1174.5 747.0h.01M1102.6 733.9h.01M1185.9 745.8h.01M1137.0 747.2h.01M1029.2 730.0h.01M1096.9 743.5h.01M976.2 735.9h.01M1208.9 733.8h.01M1113.4 741.8h.01M1068.7 732.2h.01M996.5 737.2h.01M1168.7 738.4h.01M929.7 734.4h.01M1163.0 733.7h.01M1104.9 745.7h.01M1195.6 739.8h.01M1072.4 738.7h.01M971.8 730.6h.01M968.5 735.0h.01M1034.6 736.9h.01M1048.0 736.7h.01M955.9 729.2h.01M1227.2 736.9h.01M937.8 733.4h.01M1167.4 732.1h.01M1110.4 735.4h.01M1086.1 729.2h.01M903.0 734.6h.01M1190.2 739.1h.01M1101.1 733.7h.01M1165.0 737.7h.01M1213.0 745.2h.01M1176.6 749.0h.01M996.3 729.2h.01M976.4 730.5h.01M927.8 729.1h.01M1098.0 745.0h.01M1066.4 744.4h.01M1202.7 730.2h.01M1110.7 736.4h.01M943.8 736.0h.01M997.4 735.1h.01M1123.7 747.6h.01M1132.5 736.7h.01M1063.2 731.4h.01M1218.4 750.1h.01M984.3 729.2h.01M996.9 732.7h.01M1200.7 748.0h.01M1181.9 729.8h.01M1167.1 743.6h.01M1125.5 748.2h.01M914.6 729.7h.01M1157.9 748.3h.01M1134.7 734.8h.01M1108.6 743.2h.01M937.5 731.2h.01M997.4 730.2h.01M1073.9 731.7h.01M990.5 730.3h.01M1134.9 729.1h.01M1146.7 732.8h.01M904.4 734.3h.01M983.8 738.3h.01M1190.4 747.6h.01M952.1 732.3h.01M933.8 735.4h.01M1183.3 742.0h.01M1064.5 734.3h.01M1177.8 738.8h.01M1119.9 731.6h.01M984.3 729.4h.01M1145.7 740.2h.01M954.1 735.7h.01M1000.8 733.5h.01M958.6 731.0h.01M1182.6 735.8h.01M963.4 733.0h.01M1019.2 740.5h.01M941.3 736.1h.01M915.1 734.5h.01M1132.1 733.0h.01M1072.6 733.6h.01M997.7 731.1h.01M1035.1 743.0h.01M1227.5 748.8h.01M934.1 730.9h.01M1198.8 730.0h.01M1149.5 734.9h.01M1222.0 729.1h.01M1173.1 735.9h.01M952.2 728.8h.01M1180.5 739.9h.01M970.5 732.7h.01M1203.3 733.4h.01M1102.4 731.4h.01M968.3 735.6h.01M1145.1 732.8h.01M925.8 729.4h.01M1113.9 738.3h.01M1003.5 731.2h.01M1115.1 742.5h.01M1174.5 741.0h.01M976.9 729.4h.01M1151.3 737.3h.01M1148.1 729.9h.01M1174.2 735.8h.01M1183.2 747.0h.01M1077.6 729.1h.01M1202.8 738.9h.01M1191.9 734.4h.01M970.6 736.3h.01M1036.1 731.2h.01M1037.5 737.4h.01M884.7 731.7h.01M1062.3 737.1h.01M944.1 734.2h.01M1175.9 746.9h.01M1020.2 738.1h.01M1040.9 739.9h.01M917.2 734.4h.01M1215.1 739.4h.01M1084.1 738.2h.01M1091.7 729.2h.01M1218.9 733.6h.01M969.2 729.7h.01M995.0 737.8h.01M901.1 729.4h.01M1141.3 732.8h.01M893.8 732.2h.01M1104.0 738.7h.01M1142.4 730.9h.01M1191.2 743.9h.01M909.2 729.5h.01M1077.8 737.4h.01M1005.6 730.3h.01M1049.1 730.9h.01M1108.7 745.2h.01M955.2 733.4h.01M1155.4 732.2h.01M1178.7 748.5h.01M1043.4 735.1h.01M1182.6 739.9h.01M1045.7 743.0h.01M1164.4 735.9h.01M991.2 732.4h.01M1059.0 744.5h.01M1172.4 747.9h.01M1175.5 746.6h.01M913.5 732.0h.01M1216.2 748.9h.01M994.5 733.4h.01M1121.3 735.9h.01M1089.7 730.0h.01M1058.2 736.8h.01M895.7 729.6h.01M1219.5 745.5h.01M1210.3 742.3h.01M1173.8 747.3h.01M1195.5 729.5h.01M1124.0 734.0h.01M1135.1 734.3h.01M1093.3 745.7h.01M1117.8 733.7h.01M1086.3 736.5h.01M1214.3 735.0h.01M1014.7 737.0h.01M944.0 733.3h.01M1215.7 739.8h.01M1001.5 734.2h.01M1090.6 731.5h.01M945.5 729.8h.01M1010.6 733.8h.01M1008.7 731.8h.01M929.7 732.6h.01M1182.6 741.6h.01M1102.0 741.0h.01M976.5 735.6h.01M1067.3 737.9h.01M1115.2 737.9h.01M1016.5 731.9h.01M984.2 734.0h.01M1041.5 737.5h.01M890.0 730.8h.01M1189.0 733.8h.01M1097.8 737.9h.01M1007.4 740.7h.01M1011.2 738.3h.01M959.8 729.3h.01M1191.7 738.1h.01M917.6 731.3h.01M1060.4 740.6h.01M939.2 730.5h.01M1216.6 744.7h.01M958.1 731.5h.01M1031.1 738.2h.01M1116.3 745.2h.01M1177.3 739.7h.01M1153.1 744.2h.01M1159.3 738.7h.01M1166.7 743.6h.01M1204.0 731.5h.01M1191.5 728.9h.01M1161.1 741.0h.01M1079.2 745.5h.01M1102.6 736.7h.01M1166.3 747.0h.01M1113.5 736.1h.01M1064.5 736.3h.01M1148.5 734.8h.01M1044.1 737.1h.01M1042.0 733.6h.01M1167.3 746.5h.01M1079.7 736.5h.01M969.9 731.5h.01M954.2 733.4h.01M1105.6 730.5h.01M1205.6 735.7h.01M1183.7 746.4h.01M1216.5 733.2h.01M1056.0 743.2h.01M889.2 729.1h.01M1100.4 738.1h.01M1205.6 745.3h.01M1092.1 746.9h.01M1085.4 738.0h.01M1137.2 736.7h.01M1032.9 737.2h.01M1030.6 742.0h.01M1134.6 739.3h.01M934.7 731.5h.01M1047.5 737.3h.01M1103.2 745.4h.01M1218.1 739.3h.01M1060.5 738.8h.01M1226.9 736.2h.01M1089.5 743.5h.01M964.6 731.5h.01M1222.0 746.6h.01M1083.9 730.7h.01M1198.3 743.4h.01M1177.1 749.6h.01M1196.5 737.7h.01M958.9 731.2h.01M1083.6 737.7h.01M971.4 730.5h.01M1120.5 740.6h.01M1031.3 742.7h.01M1122.5 729.6h.01M1051.0 741.0h.01M1015.2 737.6h.01M884.1 730.5h.01M1183.3 741.1h.01M1132.0 732.7h.01M1079.2 738.4h.01M1000.6 736.2h.01M1089.9 746.8h.01M1103.4 736.5h.01M944.5 730.0h.01M1159.3 731.0h.01M935.2 730.0h.01M1087.0 743.5h.01M1115.3 744.4h.01M917.7 728.9h.01M1162.5 735.5h.01M1146.2 736.1h.01M964.1 731.1h.01M934.9 735.3h.01M1105.8 735.4h.01M1063.7 735.1h.01M914.0 734.4h.01M1105.9 747.0h.01M1060.3 738.8h.01M994.6 729.3h.01M1208.6 747.0h.01M1018.0 740.4h.01M1175.7 735.2h.01M1112.0 747.2h.01M1078.4 745.2h.01M992.2 733.0h.01M1147.1 733.4h.01M1016.1 740.0h.01M1074.9 742.3h.01M992.4 730.7h.01M1033.1 731.4h.01M1220.1 735.1h.01M1099.3 730.9h.01M1090.6 735.8h.01M1048.3 729.8h.01M945.2 735.1h.01M1030.7 732.2h.01M972.6 731.4h.01M990.1 729.2h.01M1130.9 735.6h.01M958.7 734.5h.01M931.9 730.7h.01M1181.3 731.5h.01M1061.5 742.3h.01M1172.5 732.1h.01M1031.3 738.9h.01M1039.4 742.8h.01M979.1 738.1h.01M1081.4 732.8h.01M1064.6 730.9h.01M1143.5 734.1h.01M1199.8 741.3h.01M1036.4 732.3h.01M1113.8 732.9h.01M1192.0 731.4h.01M1084.0 738.4h.01M1002.2 737.8h.01M1042.1 738.6h.01M1101.2 734.6h.01M1043.8 730.1h.01M967.1 736.3h.01M1020.2 737.5h.01M939.1 732.9h.01M1034.2 735.9h.01M1011.7 729.6h.01M1016.8 731.7h.01M946.4 734.3h.01M1006.5 733.6h.01M1202.4 745.3h.01M1195.0 747.0h.01M948.9 730.9h.01M900.8 732.7h.01M1130.7 735.8h.01M1051.4 739.0h.01M1141.4 733.9h.01M1184.6 736.2h.01M1120.1 732.3h.01M941.8 735.6h.01M1151.7 743.6h.01M906.7 729.0h.01M961.1 730.4h.01M1013.9 733.6h.01M906.1 730.7h.01M1123.0 732.3h.01M1182.5 740.8h.01M1146.6 734.0h.01M1058.8 739.7h.01M1029.9 728.8h.01M1181.0 745.1h.01M1008.0 729.3h.01M1186.8 741.6h.01M910.3 730.3h.01M940.0 734.6h.01M979.9 737.8h.01M1156.3 730.6h.01M1140.0 736.8h.01M1155.7 746.0h.01M1006.1 729.9h.01M1213.0 737.9h.01M1208.4 743.6h.01M1153.1 746.0h.01M1119.9 737.6h.01M913.8 733.2h.01M1056.6 736.9h.01M1207.8 731.5h.01M1160.0 729.7h.01M1142.4 745.2h.01M998.9 735.0h.01M1219.5 742.5h.01M1093.8 733.4h.01M916.4 731.1h.01M1051.1 731.9h.01M1016.5 730.5h.01M1143.7 742.5h.01M990.3 731.4h.01M1084.8 736.7h.01M1210.0 736.3h.01M1012.6 739.8h.01M953.0 733.3h.01M1024.6 739.8h.01M1095.2 742.8h.01M964.0 734.5h.01M1110.9 737.6h.01M1161.2 746.1h.01M941.5 730.9h.01M1033.8 731.7h.01M916.8 730.6h.01M974.9 735.4h.01M1063.1 730.6h.01M1021.4 735.0h.01M1034.7 731.2h.01M922.3 728.9h.01M1225.8 745.0h.01M928.0 733.7h.01M1222.5 741.0h.01M939.0 732.4h.01M1058.6 731.8h.01M1093.5 729.0h.01M1205.4 742.5h.01M1119.8 747.0h.01M1127.3 733.8h.01M993.3 730.3h.01M899.7 733.2h.01M1182.6 735.0h.01M970.5 734.6h.01M1184.3 748.3h.01M963.7 735.5h.01M1179.9 744.4h.01M1022.2 731.2h.01M1178.5 735.5h.01M1036.6 736.7h.01M1036.8 740.8h.01M990.9 729.2h.01M1101.0 740.6h.01M1176.8 743.6h.01M1201.3 748.9h.01M1078.1 737.4h.01M959.3 731.2h.01M1105.4 730.3h.01M1138.0 732.1h.01M1061.5 744.4h.01M930.5 729.1h.01M1060.3 731.9h.01M1148.5 728.9h.01M1182.9 746.8h.01M1167.3 737.7h.01M1006.9 736.7h.01M1084.5 736.2h.01M1026.4 734.8h.01M1131.4 745.3h.01M1201.0 732.3h.01M1011.3 734.3h.01M1099.9 735.3h.01M974.3 729.6h.01M1021.2 734.9h.01M1220.0 748.4h.01M1190.0 749.4h.01M1217.3 742.1h.01M1174.3 730.1h.01M1134.5 741.0h.01M1011.8 735.9h.01M1214.8 739.1h.01M1125.8 734.7h.01M1028.0 740.9h.01M899.8 729.9h.01M1135.2 737.8h.01M928.5 733.3h.01M1037.8 737.2h.01M1052.7 737.0h.01M1100.3 736.2h.01M941.4 730.1h.01M1197.0 740.4h.01M940.5 735.2h.01M996.1 729.9h.01M1089.7 733.3h.01M1076.4 738.3h.01M986.1 734.7h.01M940.8 732.6h.01M1107.7 730.3h.01M1049.9 729.9h.01M1060.3 742.7h.01M1095.9 742.0h.01M1158.5 731.2h.01M1225.4 744.4h.01M936.1 734.8h.01M1044.5 731.4h.01M1216.8 740.9h.01M1163.8 731.7h.01M1164.1 730.0h.01M990.0 732.8h.01M892.2 732.2h.01M981.0 731.8h.01M1143.8 737.5h.01M1196.6 741.9h.01M1191.9 740.7h.01M1204.8 747.3h.01M963.5 735.1h.01M1027.3 739.2h.01M1135.8 745.4h.01M945.0 731.6h.01M1152.7 748.4h.01M1148.1 729.7h.01M1112.4 730.7h.01M1095.3 743.6h.01M940.8 735.6h.01M1134.2 733.9h.01M973.4 732.9h.01M1182.2 741.0h.01M941.1 729.0h.01M939.7 734.7h.01M970.3 733.8h.01M1009.3 737.2h.01M1040.8 730.9h.01M1192.9 740.2h.01M1138.5 745.2h.01M1213.7 729.1h.01M1027.6 730.9h.01M1080.4 744.0h.01M1171.2 729.5h.01M969.2 736.1h.01M1135.5 736.7h.01M1072.1 731.5h.01M1184.2 737.1h.01M1192.2 741.7h.01M924.2 731.0h.01M982.2 737.7h.01M1107.9 729.6h.01M964.2 731.9h.01M1069.5 738.4h.01M1043.1 734.1h.01M885.8 732.0h.01M1024.7 729.1h.01M1066.8 745.1h.01M909.3 729.7h.01M1132.9 734.3h.01M1003.3 734.7h.01M999.2 735.3h.01M1088.8 746.0h.01M1225.8 729.5h.01M1099.0 743.2h.01M1192.0 745.2h.01M1121.4 741.2h.01M1034.7 732.8h.01M1169.7 747.0h.01M1210.8 743.4h.01M1014.2 738.4h.01M1153.4 739.4h.01M1122.1 735.7h.01M1095.9 736.3h.01M916.9 731.0h.01M1021.0 741.8h.01M1073.9 735.0h.01M992.4 731.3h.01M1030.0 730.7h.01M886.7 733.7h.01M1064.7 736.1h.01M1101.6 734.5h.01M963.9 729.4h.01M1013.4 732.7h.01M1149.6 740.2h.01M1210.5 736.1h.01M1205.9 741.2h.01M926.2 730.0h.01M1105.2 747.5h.01M1032.6 739.7h.01M1056.6 742.5h.01M920.4 732.0h.01M1199.6 734.6h.01M997.6 729.1h.01M962.2 731.0h.01M1142.9 733.3h.01M1047.1 731.8h.01M1112.2 745.4h.01M1126.0 732.7h.01M1151.7 748.8h.01M1111.6 730.3h.01M1173.9 747.1h.01M1027.2 730.7h.01M971.5 733.7h.01M1192.9 742.3h.01M1206.4 733.3h.01M1022.2 738.7h.01M1126.2 736.8h.01M1135.3 735.6h.01M915.4 731.4h.01M909.4 732.6h.01M1024.9 735.5h.01M1110.6 733.7h.01M1068.1 729.0h.01M1207.0 740.8h.01M1224.5 730.0h.01M1115.6 742.8h.01M1023.1 730.0h.01M958.8 730.0h.01M1161.5 730.7h.01M1175.2 737.7h.01M1092.1 739.5h.01M1097.3 741.0h.01M1111.7 735.1h.01M1153.8 734.1h.01M1145.0 744.4h.01M1164.1 735.2h.01M1163.1 749.2h.01M1064.7 733.3h.01M1087.3 745.6h.01M948.8 728.9h.01M1072.1 739.8h.01M1163.6 736.4h.01M1225.1 733.7h.01M1158.4 730.7h.01M899.9 729.6h.01M916.7 732.0h.01M1097.4 732.2h.01M1211.1 736.6h.01M956.0 730.2h.01M1152.8 747.9h.01M961.2 729.0h.01M1164.7 733.9h.01M1223.1 739.6h.01M1122.3 735.5h.01M1171.3 738.4h.01M1021.2 740.7h.01M938.6 734.2h.01M919.3 733.0h.01M1047.8 742.0h.01M916.6 732.4h.01M1050.5 743.0h.01M1212.6 742.2h.01M985.2 731.4h.01M999.3 733.7h.01M987.9 730.9h.01M1159.2 742.2h.01M1012.3 741.2h.01M982.4 734.5h.01M959.0 735.8h.01M1191.1 734.4h.01M1156.9 745.9h.01M1006.6 732.8h.01M1075.2 744.0h.01M961.0 734.5h.01M1110.5 737.5h.01M1104.8 745.5h.01M979.8 737.5h.01M1033.8 739.9h.01M1189.4 732.6h.01M1189.6 749.8h.01M1012.0 729.1h.01M940.2 736.0h.01M888.3 733.9h.01M956.6 734.7h.01M934.1 730.0h.01M1136.4 730.6h.01M1026.7 741.3h.01M1146.5 746.9h.01M1222.3 729.5h.01M989.1 737.2h.01M1138.5 729.6h.01M1081.4 732.8h.01M1057.3 730.5h.01M895.2 734.4h.01M1018.6 740.2h.01M944.0 732.5h.01M950.5 732.1h.01M967.9 734.9h.01M955.4 734.7h.01M1080.1 730.8h.01M1031.5 735.8h.01M1205.2 736.2h.01M981.8 738.4h.01M1195.1 744.3h.01M1003.2 730.9h.01M1000.1 729.6h.01M908.2 731.9h.01M1049.9 737.3h.01M1034.6 729.0h.01M1138.1 742.0h.01M1093.8 738.8h.01M1138.7 748.7h.01M1192.5 744.0h.01M1047.0 733.6h.01M1053.6 744.0h.01M1042.9 734.5h.01M1050.5 731.0h.01M1227.5 728.9h.01M1113.7 746.6h.01M996.5 735.6h.01M1039.4 732.3h.01M975.4 729.9h.01M1183.6 745.3h.01M1202.3 729.9h.01M1139.9 735.4h.01M1125.4 739.6h.01M1018.3 741.4h.01M881.3 733.0h.01M1186.6 739.5h.01M1108.9 747.8h.01M989.0 735.4h.01M1154.5 736.7h.01M1145.2 736.9h.01M1088.2 739.8h.01M1134.8 735.3h.01M1120.1 739.4h.01M984.9 735.1h.01M1000.2 739.2h.01M1071.3 740.9h.01M1086.9 737.3h.01M984.1 730.2h.01M1207.6 740.1h.01M1087.5 738.2h.01M1175.0 733.8h.01M965.3 735.9h.01M1067.1 739.4h.01M1179.1 747.6h.01M1190.7 729.7h.01M1040.9 741.1h.01M1176.3 731.4h.01M957.8 730.8h.01M936.4 731.4h.01M1172.0 739.7h.01M1064.6 730.2h.01M1045.7 743.8h.01M1140.1 737.9h.01M1072.9 742.3h.01M1159.1 731.9h.01M1135.7 736.2h.01M1086.5 733.0h.01M1037.3 733.7h.01M1040.9 729.1h.01M976.4 734.2h.01M915.5 729.9h.01M1147.0 734.5h.01M1021.3 732.0h.01M1181.0 730.7h.01M1122.3 745.6h.01M976.7 732.8h.01M1168.9 741.7h.01M1037.6 729.4h.01M1061.3 734.7h.01M1145.4 734.9h.01M1049.8 738.8h.01M1174.3 736.2h.01M1042.3 737.4h.01M1206.9 732.9h.01M1220.0 744.1h.01M1037.9 738.5h.01M1023.2 729.7h.01M1158.2 736.7h.01M1088.1 737.7h.01M1200.2 744.9h.01M898.5 732.2h.01M1067.8 736.5h.01M1182.6 737.5h.01M1071.4 743.8h.01M1060.4 736.7h.01M1083.6 743.3h.01M1132.7 743.6h.01M1047.8 729.4h.01M1135.6 739.9h.01M1162.1 744.8h.01M943.0 730.5h.01M924.8 734.3h.01M935.9 729.4h.01M1157.4 740.5h.01M914.2 733.1h.01M1144.9 738.7h.01M914.1 733.1h.01M1053.2 737.9h.01M1227.5 746.5h.01M1191.9 731.9h.01M1024.9 735.8h.01M885.8 734.3h.01M1003.8 731.9h.01M1017.4 732.1h.01M1188.1 740.5h.01M1083.4 736.2h.01M912.3 730.7h.01M1190.4 745.7h.01M1187.5 734.2h.01M976.8 729.3h.01M1091.6 735.6h.01M1068.3 736.9h.01M1106.2 735.7h.01M1171.5 733.0h.01M1205.4 740.6h.01M912.3 730.8h.01M1090.4 736.2h.01M1100.4 734.9h.01M1003.4 738.1h.01M1009.8 737.5h.01M1171.8 741.2h.01M1065.2 744.1h.01M1062.0 743.0h.01M915.5 731.6h.01M1123.3 729.8h.01M1189.2 730.3h.01M1110.1 732.2h.01M1206.2 740.8h.01M1171.3 739.2h.01M1133.8 742.3h.01M1011.0 731.4h.01M1182.2 731.9h.01M1204.9 733.2h.01M935.5 729.5h.01M1166.5 748.6h.01M1052.1 739.0h.01M997.6 739.0h.01M1137.4 731.9h.01M915.0 733.2h.01M907.4 733.8h.01M1010.6 731.7h.01M1105.7 734.8h.01M1099.0 731.7h.01M1203.2 735.7h.01M1183.1 732.0h.01M1170.9 749.3h.01M1044.3 729.3h.01M1040.5 738.2h.01M984.9 734.4h.01M932.3 732.1h.01M1150.0 737.7h.01M1135.3 731.1h.01M1179.4 731.4h.01M1206.5 750.0h.01M1211.0 740.1h.01M1009.5 733.1h.01M1156.6 739.1h.01M1208.3 730.8h.01M1075.0 743.5h.01M1110.6 739.1h.01M930.0 729.8h.01M1002.5 739.2h.01M1184.3 733.6h.01M1206.8 729.5h.01M1110.9 747.3h.01M1028.3 741.8h.01M1128.5 729.8h.01M1024.4 734.8h.01M993.8 736.9h.01M967.8 735.8h.01M1012.2 729.7h.01M1098.6 730.6h.01M1096.2 743.3h.01M1109.9 737.6h.01M903.1 731.8h.01M933.9 733.4h.01M948.9 733.3h.01M1031.2 734.0h.01M1130.5 732.1h.01M964.2 736.8h.01M1023.9 740.1h.01M1192.3 738.9h.01M955.9 729.6h.01M1193.9 731.3h.01M1078.6 738.1h.01M942.8 732.3h.01M961.9 733.3h.01M1082.0 735.2h.01M975.1 732.6h.01M977.4 730.0h.01M991.1 738.1h.01M1080.4 744.3h.01M892.2 734.1h.01M1076.2 742.3h.01M1102.1 741.7h.01M987.1 736.6h.01M957.8 730.9h.01M901.6 731.1h.01M1085.6 734.0h.01M1197.2 730.6h.01M1104.6 733.2h.01M1109.8 743.8h.01M1144.8 730.1h.01M993.2 735.3h.01M1223.2 729.7h.01M1116.9 742.2h.01M1175.4 736.0h.01M1174.2 738.5h.01M1205.8 729.0h.01M1211.3 737.6h.01M1049.6 730.2h.01M992.9 736.8h.01M1135.3 731.8h.01M1028.3 730.7h.01M975.3 730.9h.01M1023.7 741.9h.01M1227.2 745.9h.01M1073.4 737.2h.01M1165.1 747.7h.01M1156.9 742.0h.01M975.7 734.7h.01M1184.3 745.4h.01M931.8 733.8h.01M1030.0 731.1h.01M1218.4 743.3h.01M1155.1 731.6h.01M1179.4 748.5h.01M1201.2 744.6h.01M1180.5 745.6h.01M1108.3 737.1h.01M1178.4 745.3h.01M1191.5 735.1h.01M1217.1 740.2h.01M1212.9 731.3h.01M1219.2 745.7h.01M995.5 738.1h.01M988.2 730.9h.01M1066.3 732.7h.01M1077.5 744.4h.01M1137.2 743.1h.01M1044.5 740.6h.01M1169.3 743.1h.01M1211.7 746.5h.01M1049.3 730.1h.01M1127.3 745.4h.01M1026.7 736.9h.01M1181.6 745.5h.01M884.6 731.5h.01M893.0 729.4h.01M1174.7 737.6h.01M1112.7 737.6h.01M1025.2 731.7h.01M1031.5 740.6h.01M1117.2 734.5h.01M929.8 730.7h.01M1142.0 737.8h.01M1129.9 744.9h.01M944.1 733.9h.01M907.3 733.7h.01M969.9 731.2h.01M1216.2 736.6h.01M985.2 737.9h.01M1114.4 746.0h.01M1045.3 736.3h.01M1215.6 739.7h.01M1224.8 732.9h.01M1180.0 732.2h.01M1088.5 728.8h.01M966.4 737.0h.01M1065.2 742.1h.01M995.1 732.7h.01M935.6 732.8h.01M1189.1 739.6h.01M1039.4 742.4h.01M1198.1 742.9h.01M924.2 733.0h.01M1061.8 744.3h.01M1034.3 738.2h.01M1121.1 736.1h.01M1086.9 740.9h.01M1201.9 739.4h.01M1035.0 742.7h.01M915.2 734.1h.01M1136.7 740.0h.01M1063.0 741.0h.01M1197.3 744.2h.01M1156.4 729.5h.01M1021.7 730.6h.01M1214.8 747.9h.01M954.1 733.5h.01M1104.1 729.7h.01M1044.6 740.0h.01M1124.0 734.3h.01M1160.1 734.9h.01M1093.9 736.5h.01M1221.9 742.8h.01M1172.5 743.0h.01M1040.6 743.0h.01M1144.5 742.9h.01M1004.8 730.7h.01M1103.6 744.4h.01M1169.3 736.1h.01M952.1 732.9h.01M1193.4 732.2h.01M1153.0 732.3h.01M1017.0 729.5h.01M1012.0 733.6h.01M1218.8 749.5h.01M971.1 731.6h.01M1212.2 733.0h.01M1020.2 734.5h.01M938.8 730.7h.01M1045.2 734.6h.01M1217.8 734.5h.01M977.6 737.5h.01M1063.8 742.4h.01M1122.6 744.1h.01M1018.0 730.8h.01M1158.5 738.6h.01M1098.4 741.3h.01M1157.2 734.5h.01M1034.6 741.9h.01M1089.2 734.0h.01M1120.5 733.9h.01M1162.7 729.7h.01M1178.8 740.7h.01M1031.5 742.0h.01M1000.5 731.6h.01M921.4 732.4h.01M1157.6 742.9h.01M1051.4 741.3h.01M940.1 731.1h.01M1125.0 747.9h.01M1121.7 742.3h.01M1163.7 737.0h.01M1211.3 744.7h.01M1027.4 734.2h.01M1172.8 736.1h.01M970.5 736.7h.01M1090.0 738.2h.01M1132.4 746.8h.01M949.5 731.4h.01M919.5 731.5h.01M1080.6 743.6h.01M1131.9 740.3h.01M1048.4 737.6h.01M1003.5 738.7h.01M1167.7 746.3h.01M956.8 734.2h.01M1157.7 739.2h.01M1199.4 747.8h.01M1154.4 745.8h.01M1126.2 746.2h.01M948.6 734.2h.01M1142.7 741.3h.01M1003.9 729.6h.01M1112.3 744.6h.01M1003.2 731.3h.01M985.1 729.8h.01M1134.4 748.4h.01M1171.7 736.3h.01M1141.4 730.3h.01M1182.3 735.6h.01M883.7 732.3h.01M951.7 731.0h.01M916.2 731.6h.01M1097.2 743.7h.01M906.3 733.7h.01M939.8 730.5h.01M1120.3 735.4h.01M1023.7 736.4h.01M982.8 736.8h.01M979.5 737.0h.01M1173.6 740.0h.01M901.3 733.3h.01M900.1 731.7h.01M1055.1 729.8h.01M1120.5 742.9h.01M1106.6 736.4h.01M1083.7 739.2h.01M986.0 737.7h.01M1226.8 746.2h.01M1217.2 735.9h.01M1224.2 730.3h.01M1072.8 731.1h.01M1065.0 740.0h.01M1144.1 738.1h.01M1027.4 731.4h.01M1048.2 733.1h.01M973.8 735.7h.01M1085.0 736.6h.01M975.1 735.4h.01M974.8 731.3h.01M1098.9 741.9h.01M1220.5 744.9h.01M1213.5 748.5h.01M1148.3 743.6h.01M918.0 730.1h.01M890.8 733.7h.01M1148.2 741.8h.01M999.8 732.9h.01M961.8 734.1h.01M1225.6 735.4h.01M908.7 729.9h.01M1032.1 741.4h.01M1172.4 738.3h.01M936.1 729.6h.01M957.9 735.1h.01M1070.6 745.4h.01M1203.2 745.7h.01M1072.2 742.6h.01M947.3 729.6h.01M1099.9 738.3h.01M979.6 731.3h.01M896.0 734.0h.01M1144.7 748.2h.01M1222.6 738.2h.01M1151.3 736.8h.01M1174.6 746.4h.01M949.6 728.9h.01M981.4 734.6h.01M1040.1 728.9h.01M1179.9 745.3h.01M1068.2 729.5h.01M1196.7 740.1h.01M921.9 730.9h.01M1118.8 746.0h.01M1074.9 739.7h.01M978.2 731.2h.01M1201.5 736.9h.01M936.9 733.1h.01M946.5 730.3h.01M1065.8 738.4h.01M1122.4 742.7h.01M1060.3 729.9h.01M1148.9 729.9h.01M1070.4 735.5h.01M1133.5 743.1h.01M991.0 735.8h.01M1139.2 738.4h.01M952.9 736.0h.01M1111.0 730.0h.01M990.6 739.3h.01M986.9 732.9h.01M1167.6 746.0h.01M1121.7 743.3h.01M905.6 729.4h.01M1221.3 746.1h.01M905.5 729.1h.01M991.3 738.8h.01M983.5 735.6h.01M1208.5 742.4h.01M1205.3 734.4h.01M957.7 728.9h.01M1158.6 731.0h.01M1220.5 744.1h.01M971.0 736.1h.01M961.5 733.1h.01M937.7 734.5h.01M1196.9 748.2h.01M882.7 733.6h.01M1097.6 744.0h.01M1080.7 739.6h.01M1109.6 744.1h.01M925.0 729.2h.01M1094.3 734.1h.01M1046.2 728.9h.01M1155.0 729.3h.01M1179.7 745.8h.01M1066.3 730.8h.01M1126.6 732.9h.01M1056.8 730.5h.01M1221.4 740.6h.01M1031.1 730.1h.01M1150.6 746.4h.01M1185.1 730.9h.01M1036.3 733.2h.01M1160.1 731.9h.01M1113.2 747.6h.01M1162.0 728.9h.01M923.8 729.6h.01M1139.4 740.9h.01M1086.3 736.9h.01M1049.7 738.2h.01M1126.1 746.9h.01M1151.3 745.3h.01M1203.5 746.6h.01M1146.6 729.4h.01M1135.9 745.9h.01M1057.4 742.7h.01M968.2 737.2h.01M1061.0 740.2h.01M995.8 732.1h.01M1029.7 733.3h.01M932.8 731.9h.01M1222.7 742.9h.01M1209.0 745.1h.01M1181.8 749.7h.01M1157.3 734.5h.01M994.7 733.3h.01M895.8 730.1h.01M1196.0 748.3h.01M1022.9 739.1h.01M1163.8 747.3h.01M1169.5 739.9h.01M937.3 734.8h.01M1017.6 736.9h.01M1036.1 736.5h.01M1218.4 732.3h.01M1089.7 740.5h.01M1092.1 745.8h.01M1049.7 742.8h.01M1138.6 748.4h.01M930.5 730.3h.01M1008.3 739.8h.01M891.2 730.3h.01M1146.3 749.1h.01M966.8 732.6h.01M1137.7 742.8h.01M1155.3 744.4h.01M994.2 731.6h.01M899.7 732.7h.01M979.6 731.3h.01M1218.0 742.6h.01M1108.5 741.3h.01M1110.6 742.1h.01M1014.2 729.6h.01M920.0 728.9h.01M1034.2 730.8h.01M940.8 732.5h.01M1219.5 743.6h.01M1003.3 737.8h.01M967.4 729.7h.01M1013.9 733.9h.01M1138.5 737.8h.01M1150.0 730.8h.01M1209.0 736.1h.01M1180.5 729.4h.01M1179.4 733.6h.01M1187.0 745.7h.01M1132.8 734.4h.01M888.6 729.9h.01M1201.3 732.2h.01M1129.4 740.5h.01M1130.0 732.4h.01M953.7 729.6h.01M1223.2 737.1h.01M1127.2 740.1h.01M984.9 729.5h.01M892.0 733.6h.01M948.1 736.2h.01M1034.9 739.1h.01M951.5 735.0h.01M995.4 732.9h.01M1087.2 730.8h.01M994.2 737.5h.01M1007.6 733.4h.01M1160.8 733.5h.01M973.7 730.8h.01M1041.9 734.2h.01M1123.9 738.1h.01M1191.2 729.9h.01M1130.7 745.5h.01M989.2 729.1h.01M1059.9 730.7h.01M1067.0 740.5h.01M932.4 729.6h.01M1073.3 731.7h.01M987.7 733.4h.01M943.1 729.3h.01M1034.1 735.5h.01M1210.2 740.7h.01M922.2 730.3h.01M1154.8 740.5h.01M1191.4 749.1h.01M1187.8 731.1h.01M1212.2 740.0h.01M991.0 730.6h.01M1189.8 733.3h.01M927.6 730.6h.01M1206.7 738.6h.01M1150.9 730.3h.01M1064.7 734.0h.01M978.1 735.2h.01M1034.1 730.5h.01M1223.6 739.2h.01M968.3 728.9h.01M1127.5 739.0h.01M897.9 731.5h.01M1153.6 739.9h.01M988.9 734.1h.01M1112.8 741.3h.01M954.3 735.2h.01M1212.8 744.7h.01M1187.7 736.6h.01M1200.6 732.7h.01M986.2 735.0h.01M1200.3 730.5h.01M982.5 729.2h.01M1060.1 731.1h.01M972.8 735.7h.01M1106.1 746.6h.01M1047.9 739.1h.01M890.5 734.1h.01M988.5 733.8h.01M1083.6 745.5h.01M1077.3 745.8h.01M1117.8 733.0h.01M1180.9 733.0h.01M1227.9 738.7h.01M986.0 738.7h.01M1020.5 734.1h.01M1027.9 738.0h.01M897.0 730.9h.01M961.2 735.7h.01M880.3 732.2h.01M997.7 733.9h.01M1099.4 742.1h.01M951.2 730.7h.01M944.0 736.0h.01M955.9 729.9h.01M1086.9 739.2h.01M1196.0 730.0h.01M989.0 730.6h.01M1106.8 737.4h.01M1050.2 742.5h.01M1130.1 745.9h.01M1216.0 734.6h.01M1211.8 737.5h.01M912.5 734.5h.01M937.0 728.9h.01M1009.1 732.3h.01M1218.8 747.5h.01M1053.9 737.1h.01M1185.2 745.8h.01M1127.6 739.0h.01M942.4 730.6h.01M1129.0 740.4h.01M1171.4 747.6h.01M1217.5 732.9h.01M924.3 734.8h.01M1102.1 732.2h.01M1139.2 734.0h.01M989.8 732.7h.01M1087.5 740.9h.01M923.1 733.7h.01M1118.7 738.0h.01M1133.2 744.8h.01M888.5 731.5h.01M1135.0 743.1h.01M1125.8 732.4h.01M1216.4 745.7h.01M988.5 733.3h.01M1216.2 733.2h.01M1050.2 743.6h.01M1199.9 733.7h.01M1152.1 736.3h.01M1130.6 744.1h.01M947.0 730.5h.01M981.7 731.5h.01M904.2 729.6h.01M1049.2 735.2h.01M925.1 732.7h.01M1211.9 741.1h.01M1032.2 738.7h.01M1059.5 731.6h.01M1074.0 729.1h.01M1134.4 732.0h.01M1037.0 742.7h.01M1161.4 746.2h.01M1124.1 741.3h.01M1143.1 748.5h.01M974.6 736.0h.01M1013.1 732.0h.01M1177.4 741.4h.01M1185.5 747.2h.01M1107.8 732.6h.01M892.1 731.8h.01M1149.2 734.4h.01M921.5 728.8h.01M965.6 734.8h.01M884.1 730.1h.01M1000.3 737.0h.01M1224.4 729.2h.01M941.3 735.7h.01M1219.6 732.0h.01M1025.2 735.9h.01M1019.9 734.3h.01M1073.1 733.2h.01M914.2 729.3h.01M961.3 729.6h.01M1118.6 742.3h.01M999.5 737.8h.01M1150.2 735.9h.01M1077.2 732.0h.01M1208.1 740.8h.01M912.3 729.8h.01M1139.4 736.6h.01M1146.7 733.5h.01M1170.3 745.6h.01M932.6 732.9h.01M972.7 735.3h.01M1172.3 745.4h.01M987.9 729.8h.01M1130.6 740.1h.01M951.5 730.3h.01M1105.8 730.8h.01M1121.7 733.5h.01M997.9 733.6h.01M1090.4 741.9h.01M901.6 733.0h.01M984.0 731.8h.01M1123.5 742.4h.01M1115.8 746.2h.01M977.8 731.8h.01M1130.3 734.0h.01M959.3 730.6h.01M1162.7 746.0h.01M1146.5 748.5h.01M1169.5 735.3h.01M1018.3 738.1h.01M914.5 732.6h.01M930.3 729.1h.01M1084.3 731.5h.01M1208.8 747.5h.01M1067.5 732.1h.01M943.6 732.6h.01M1086.7 735.3h.01M1146.5 739.7h.01M1163.9 731.0h.01M921.5 731.4h.01M1074.6 733.1h.01M1132.2 733.2h.01M1019.2 735.0h.01M1145.3 744.6h.01M1037.7 735.3h.01M1207.7 748.7h.01M1117.0 730.8h.01M1065.6 739.2h.01M1005.2 729.2h.01M1222.7 748.4h.01M947.6 732.4h.01M1117.2 734.6h.01M920.8 733.7h.01M1162.6 737.9h.01M928.7 731.5h.01M932.5 735.6h.01M912.3 730.6h.01M1161.7 731.6h.01M938.0 729.3h.01M961.9 733.2h.01M1180.7 732.4h.01M965.8 735.4h.01M1055.8 734.1h.01M945.2 730.6h.01M1220.1 731.3h.01M998.3 737.2h.01M1197.5 747.9h.01M1071.1 744.8h.01M1112.5 734.3h.01M1068.7 740.7h.01M1151.7 731.5h.01M973.6 737.7h.01M938.2 734.7h.01M1026.4 732.2h.01M996.7 734.0h.01M1225.4 732.0h.01M1186.9 735.6h.01M965.4 735.2h.01M1027.4 731.4h.01M1053.3 741.6h.01M1189.3 740.9h.01M889.0 733.1h.01M1113.3 746.1h.01M1214.6 735.8h.01M1185.1 746.0h.01M1000.6 733.0h.01M1038.7 733.9h.01M1039.9 730.4h.01M986.3 738.2h.01M1050.7 738.6h.01M1196.3 744.8h.01M992.7 738.8h.01M1172.3 749.5h.01M1150.0 744.4h.01M1174.9 734.1h.01M1128.4 736.4h.01M1182.6 731.6h.01M1092.3 734.9h.01M1177.1 736.0h.01M1183.8 746.6h.01M1193.8 731.7h.01M1210.7 744.7h.01M1134.7 741.9h.01M910.7 734.1h.01M1095.0 737.2h.01M1026.6 739.5h.01M1165.9 746.9h.01M981.4 732.2h.01M994.6 729.9h.01M1022.4 729.1h.01M1170.1 733.5h.01M921.8 729.2h.01M1153.8 732.9h.01M1067.6 735.4h.01M1171.8 748.8h.01M1016.3 736.9h.01M1198.4 738.8h.01M1199.8 744.4h.01M1016.9 740.0h.01M1103.0 730.8h.01M1107.4 744.6h.01M1085.8 737.4h.01M1052.7 742.5h.01M1131.3 732.9h.01M1034.5 734.0h.01M1216.4 743.7h.01M945.9 735.8h.01M903.8 732.3h.01M1057.9 740.2h.01M1056.9 730.3h.01M1087.4 743.5h.01M1167.9 736.2h.01M984.5 736.4h.01M1171.6 733.4h.01M1195.1 749.8h.01M1058.3 734.9h.01M1144.6 747.8h.01M976.7 731.7h.01M1023.0 738.6h.01M970.9 733.8h.01M1080.0 740.4h.01M953.5 736.4h.01M1228.0 741.0h.01M1169.7 732.6h.01M1202.8 740.5h.01M1159.3 746.9h.01M1034.3 742.0h.01M978.9 729.0h.01M1080.6 744.4h.01M1200.0 749.0h.01M1083.3 745.2h.01M1098.8 731.5h.01M1120.8 744.5h.01M1055.1 738.3h.01M998.1 731.9h.01M1053.9 736.8h.01M1069.7 730.3h.01M885.6 730.7h.01M1146.7 744.2h.01M990.0 731.5h.01M1085.2 731.9h.01M1112.2 746.1h.01M976.8 734.4h.01M1147.8 744.2h.01M1145.2 743.4h.01M1003.0 738.6h.01M1207.0 729.9h.01M1212.4 738.3h.01M929.0 729.3h.01M1170.2 743.0h.01M953.1 732.4h.01M1123.1 748.4h.01M1025.4 739.2h.01M993.0 731.0h.01M960.8 732.2h.01M1116.9 734.7h.01M961.1 730.6h.01M928.4 730.1h.01M1018.4 735.3h.01M969.7 733.1h.01M1060.4 744.4h.01M1075.5 744.9h.01M1070.7 732.1h.01M1108.8 731.6h.01M964.0 729.4h.01M1142.0 748.5h.01M1048.3 734.2h.01M1055.6 734.3h.01M1138.8 736.7h.01M957.2 735.8h.01M1102.8 728.9h.01M1185.4 744.1h.01M1031.8 737.6h.01M1205.6 737.4h.01M1058.0 733.5h.01M1097.0 741.1h.01M1152.0 748.5h.01M954.4 731.7h.01M1186.0 745.5h.01M1108.2 741.7h.01M1026.8 741.7h.01M1095.5 736.2h.01M969.2 729.8h.01M1199.2 745.8h.01M899.2 730.6h.01M1073.3 737.2h.01M1034.9 741.6h.01M1030.2 736.2h.01M1208.2 742.4h.01M1072.5 734.4h.01M1042.9 737.9h.01M1167.0 734.2h.01M1037.3 734.4h.01M1034.7 741.8h.01M1092.2 733.8h.01M1024.2 739.8h.01M960.4 734.5h.01M896.3 729.9h.01M916.4 733.9h.01M955.0 730.6h.01M915.5 730.5h.01M1151.6 743.7h.01M1202.8 748.9h.01M1096.0 745.8h.01M930.5 735.2h.01M1058.5 731.9h.01M1155.9 746.6h.01M1042.4 730.2h.01M1192.1 744.7h.01M1110.3 747.5h.01M905.5 729.1h.01M945.6 729.0h.01M1144.1 741.7h.01M940.5 730.0h.01M968.6 734.2h.01M1133.4 748.2h.01M1033.9 742.7h.01M1058.6 735.0h.01M996.0 731.4h.01M1220.9 750.2h.01M1143.4 732.4h.01M968.2 730.2h.01M1030.6 739.1h.01M916.1 732.2h.01M1135.8 729.5h.01M1060.3 741.5h.01M1103.7 737.3h.01M1194.6 741.5h.01M1025.8 734.2h.01M1212.1 747.2h.01M1204.1 740.7h.01M953.2 730.2h.01M1041.6 739.0h.01M884.7 733.3h.01M1167.0 739.5h.01M885.5 733.3h.01M1051.9 739.2h.01M1101.9 742.5h.01M1050.1 743.6h.01M1215.6 748.7h.01M1115.9 734.9h.01M1039.3 732.7h.01M1200.9 745.6h.01M1167.6 745.9h.01M1225.4 743.7h.01M1019.3 738.7h.01M999.3 735.8h.01M959.7 735.8h.01M1076.3 733.5h.01M1206.4 730.6h.01M1208.4 745.0h.01M955.9 734.9h.01M1103.0 745.9h.01M1107.1 736.9h.01M1209.3 730.7h.01M1164.4 730.9h.01M1004.5 730.1h.01M1191.7 738.1h.01M1149.5 734.1h.01M1150.6 742.2h.01M934.1 732.3h.01M1148.1 733.2h.01M1127.9 734.3h.01M1037.3 742.1h.01M1212.1 750.2h.01M1056.1 737.8h.01M1173.6 744.7h.01M1065.7 743.0h.01M1047.6 743.2h.01M1071.1 730.8h.01M1156.2 731.8h.01M1135.5 729.9h.01M1224.7 740.5h.01M1153.6 731.5h.01M1122.6 736.2h.01M994.5 737.8h.01M902.9 731.6h.01M929.3 734.7h.01M1197.9 729.5h.01M1068.5 736.6h.01M1147.2 743.8h.01M1027.9 741.6h.01M970.3 730.0h.01M1175.4 731.3h.01M970.6 733.3h.01M1025.5 731.0h.01M1208.3 738.9h.01M1167.0 734.0h.01M1203.5 733.5h.01M1201.7 741.8h.01M1219.9 745.4h.01M1120.7 739.2h.01M1187.0 738.1h.01M934.4 735.3h.01M1172.7 743.1h.01M1154.9 733.6h.01M1068.1 742.4h.01M1217.4 748.6h.01M960.5 734.4h.01M1097.0 736.3h.01M963.4 730.0h.01M1070.3 737.0h.01M1001.3 733.0h.01M1097.0 742.9h.01M1108.0 731.9h.01M1195.9 736.6h.01M1216.8 749.9h.01M952.3 733.4h.01M1218.7 737.1h.01M1094.9 734.6h.01M900.3 730.0h.01M945.5 731.0h.01M1120.3 739.8h.01M1213.5 743.5h.01M1034.5 742.3h.01M1121.7 739.4h.01M1189.2 742.9h.01M1033.8 737.4h.01M1012.9 740.9h.01M992.7 739.4h.01M918.8 728.9h.01M1096.7 732.6h.01M1082.3 730.9h.01M1181.8 742.9h.01M1136.9 747.5h.01M1225.8 743.5h.01M1145.5 728.8h.01M911.3 731.4h.01M1219.4 735.5h.01M1101.5 729.0h.01M1052.4 742.8h.01M1108.0 744.5h.01M890.8 729.9h.01M968.0 736.2h.01M935.9 735.5h.01M1001.2 739.0h.01M1084.8 734.5h.01M1218.6 737.5h.01M1140.8 730.2h.01M1179.9 749.4h.01M939.7 734.3h.01M1002.2 730.5h.01M1035.1 738.3h.01M1215.0 750.1h.01M1226.2 742.3h.01M1127.6 732.0h.01M1149.4 740.2h.01M1033.3 741.5h.01M996.7 730.4h.01M959.6 730.0h.01M1107.7 744.0h.01M960.3 732.9h.01M1103.3 739.4h.01M1051.4 737.2h.01M892.2 729.1h.01M1054.7 732.5h.01M1158.5 733.8h.01M1178.1 733.9h.01M931.9 732.2h.01M1043.0 733.8h.01M1160.9 733.4h.01M1132.6 745.5h.01M1064.6 737.0h.01M1206.6 741.7h.01M968.6 729.4h.01M927.1 731.1h.01M930.2 733.3h.01M1055.0 733.6h.01M1083.8 745.3h.01M992.7 730.5h.01M1014.7 732.9h.01M1202.7 743.8h.01M1056.8 731.4h.01M909.3 729.5h.01M1184.9 742.4h.01M959.0 733.9h.01M915.9 732.0h.01M1025.2 730.2h.01M1154.2 743.7h.01M1083.3 731.8h.01M1132.5 737.5h.01M1130.0 730.6h.01M1200.6 728.9h.01M984.7 732.9h.01M975.4 729.6h.01M1137.8 748.9h.01M1025.1 732.4h.01M1132.8 733.3h.01M1047.4 739.3h.01M1057.4 731.3h.01M921.7 732.4h.01M1225.4 748.7h.01M935.1 732.4h.01M1076.2 732.1h.01M1132.6 738.7h.01M1173.7 734.9h.01M1209.5 746.2h.01M1071.4 731.2h.01M1074.6 731.0h.01M1137.3 742.9h.01M1104.5 747.2h.01M909.2 733.2h.01M1171.4 731.2h.01M1020.6 729.5h.01M1106.0 742.5h.01M1029.6 738.4h.01M1036.0 739.0h.01M1004.6 740.4h.01M1059.8 728.9h.01M931.4 733.9h.01M1189.8 742.2h.01M958.5 735.9h.01M1146.6 731.2h.01M1040.7 738.7h.01M883.9 729.0h.01M1031.5 741.1h.01M1227.0 735.7h.01M1202.4 745.5h.01M1189.9 741.2h.01M1219.4 742.7h.01M1213.4 740.9h.01M974.7 733.7h.01M1074.4 734.5h.01M1038.3 736.2h.01M1107.6 733.0h.01M1004.8 734.8h.01M1081.1 736.1h.01M1130.8 732.5h.01M1090.0 733.8h.01M1162.4 743.5h.01M1165.6 739.6h.01M994.4 739.0h.01M1083.3 735.4h.01M1009.4 733.7h.01M1144.2 745.6h.01M1074.3 741.2h.01M981.0 733.3h.01M1033.0 733.1h.01M1033.5 739.5h.01M1151.5 733.1h.01M988.8 737.1h.01M1127.9 742.2h.01M1122.1 742.4h.01M1003.1 729.5h.01M1033.9 729.3h.01M1217.4 740.1h.01M1132.7 748.1h.01M1172.4 733.6h.01M1025.7 730.3h.01M1169.8 744.2h.01M1075.9 735.1h.01M1002.0 734.5h.01M1145.2 747.2h.01M1185.2 747.1h.01M1060.2 735.6h.01M1017.8 741.4h.01M969.6 730.2h.01M1006.0 739.8h.01M1186.4 735.8h.01M1186.1 747.6h.01M1056.2 731.8h.01M1163.1 736.6h.01M943.5 735.6h.01M1060.3 735.2h.01M1109.8 733.7h.01M895.4 731.0h.01M1040.2 729.0h.01M1037.7 739.8h.01M1024.4 737.9h.01M1118.8 732.5h.01M895.4 732.6h.01M1114.6 734.5h.01M976.1 736.9h.01M1202.5 733.8h.01M1106.9 739.7h.01M1020.6 729.3h.01M1021.7 737.3h.01M1111.9 738.6h.01M944.8 730.4h.01M1016.8 734.1h.01M1034.8 741.7h.01M942.1 736.2h.01M991.2 738.0h.01M992.4 735.2h.01M1039.5 729.4h.01M1170.1 745.7h.01M1001.8 737.8h.01M1073.2 745.5h.01M913.9 731.2h.01M986.6 735.3h.01M1164.7 746.4h.01M1095.2 735.9h.01M1171.0 731.0h.01M998.5 737.3h.01M1060.6 744.8h.01M931.1 732.0h.01M980.8 728.8h.01M932.3 729.4h.01M1036.7 735.0h.01M1082.4 733.9h.01M1142.2 739.3h.01M1222.9 732.5h.01M1083.3 737.5h.01M1037.7 741.3h.01M979.7 737.4h.01M1032.9 733.5h.01M1115.8 739.7h.01M1007.1 729.8h.01M1215.5 736.7h.01M941.4 733.7h.01M1090.0 734.7h.01M1022.8 740.0h.01M1026.3 734.5h.01M1215.9 736.5h.01M1047.9 731.3h.01M1130.3 742.0h.01M1062.5 735.4h.01M988.4 737.1h.01M1066.1 742.5h.01M1038.8 739.5h.01M900.4 730.1h.01M1217.0 743.5h.01M1134.3 738.8h.01M1071.0 732.1h.01M965.5 734.4h.01M1139.8 734.0h.01M1124.9 731.5h.01M1115.3 732.1h.01M1082.9 734.3h.01M880.1 733.8h.01M880.0 729.4h.01M882.5 734.0h.01M883.6 729.3h.01M886.6 734.7h.01M886.5 728.6h.01M889.5 734.8h.01M889.7 729.7h.01M892.5 734.3h.01M893.7 729.8h.01M896.3 733.8h.01M896.2 728.3h.01M900.1 735.1h.01M899.7 728.7h.01M903.1 734.0h.01M903.1 729.2h.01M904.6 735.2h.01M905.5 729.9h.01M909.2 734.8h.01M909.5 728.6h.01M912.8 734.7h.01M911.1 728.9h.01M914.3 734.4h.01M915.4 728.4h.01M917.7 734.9h.01M918.0 730.0h.01M922.4 735.8h.01M922.6 729.1h.01M925.4 735.1h.01M925.7 729.8h.01M928.5 735.2h.01M927.2 730.1h.01M931.3 735.9h.01M931.9 728.5h.01M934.8 735.8h.01M935.0 729.1h.01M937.0 736.6h.01M937.2 729.7h.01M941.5 735.7h.01M941.2 729.0h.01M943.4 735.8h.01M944.9 728.9h.01M947.2 736.4h.01M946.3 729.7h.01M950.9 737.0h.01M950.1 728.6h.01M953.3 737.0h.01M953.9 729.0h.01M956.8 736.3h.01M957.6 729.1h.01M960.0 737.3h.01M959.4 729.6h.01M962.9 737.6h.01M962.4 728.8h.01M966.7 737.4h.01M966.2 729.4h.01M969.0 737.6h.01M968.6 729.8h.01M972.3 738.4h.01M972.9 729.4h.01M976.3 737.7h.01M976.6 728.8h.01M979.9 738.9h.01M979.6 729.8h.01M982.3 739.0h.01M983.3 728.6h.01M984.8 738.9h.01M985.6 728.5h.01M988.2 739.8h.01M988.6 728.5h.01M991.4 739.6h.01M991.4 729.2h.01M995.3 739.7h.01M995.2 729.9h.01M997.4 740.6h.01M997.8 728.3h.01M1002.1 740.4h.01M1001.7 728.6h.01M1005.4 740.3h.01M1005.3 728.7h.01M1008.1 741.0h.01M1007.7 729.2h.01M1010.3 741.3h.01M1011.6 728.5h.01M1014.5 741.6h.01M1013.6 729.9h.01M1018.3 741.0h.01M1017.1 728.4h.01M1020.3 741.3h.01M1020.8 728.7h.01M1023.6 742.0h.01M1023.7 729.8h.01M1027.6 741.8h.01M1026.6 728.2h.01M1030.1 742.1h.01M1030.8 729.8h.01M1034.6 742.5h.01M1032.7 729.7h.01M1036.6 743.7h.01M1036.6 728.8h.01M1039.1 744.0h.01M1040.0 729.1h.01M1043.1 744.0h.01M1043.9 729.2h.01M1045.8 743.7h.01M1047.2 729.0h.01M1049.9 744.1h.01M1049.5 729.3h.01M1052.3 744.3h.01M1053.5 728.4h.01M1055.7 745.0h.01M1057.0 728.2h.01M1059.5 744.9h.01M1059.9 729.1h.01M1061.7 744.6h.01M1062.8 729.7h.01M1065.0 745.3h.01M1065.9 729.5h.01M1067.8 745.2h.01M1068.4 729.4h.01M1071.7 745.0h.01M1072.3 728.8h.01M1075.8 745.5h.01M1075.3 729.8h.01M1077.6 746.3h.01M1077.5 730.1h.01M1080.7 746.5h.01M1081.3 728.6h.01M1084.6 746.4h.01M1084.6 728.4h.01M1088.0 746.3h.01M1088.9 729.0h.01M1091.1 746.4h.01M1092.1 728.8h.01M1094.7 747.5h.01M1094.2 729.7h.01M1097.2 746.7h.01M1096.7 729.1h.01M1101.5 747.0h.01M1100.7 729.7h.01M1103.6 747.1h.01M1104.0 729.1h.01M1108.1 748.2h.01M1106.7 729.3h.01M1110.2 747.2h.01M1110.3 730.0h.01M1113.2 748.1h.01M1114.0 728.3h.01M1117.6 747.5h.01M1116.4 729.6h.01M1119.0 748.0h.01M1119.3 729.1h.01M1122.2 747.8h.01M1122.6 728.4h.01M1125.6 748.0h.01M1126.4 728.5h.01M1130.2 748.5h.01M1129.1 728.7h.01M1133.5 748.1h.01M1133.3 728.4h.01M1136.9 748.7h.01M1136.2 729.9h.01M1138.4 748.4h.01M1139.6 729.4h.01M1142.8 748.8h.01M1142.4 728.6h.01M1145.5 748.9h.01M1145.8 728.8h.01M1148.3 749.6h.01M1148.0 729.8h.01M1152.0 749.0h.01M1151.2 729.2h.01M1155.2 749.8h.01M1154.9 729.0h.01M1159.2 749.2h.01M1159.4 730.0h.01M1162.6 750.1h.01M1161.1 729.8h.01M1165.0 749.1h.01M1165.8 729.5h.01M1168.6 749.7h.01M1167.2 729.9h.01M1170.6 749.3h.01M1171.4 728.6h.01M1174.3 749.9h.01M1173.6 729.5h.01M1176.8 749.6h.01M1177.9 729.6h.01M1179.9 749.3h.01M1181.7 729.0h.01M1183.8 749.6h.01M1184.4 729.7h.01M1187.5 749.6h.01M1187.3 729.2h.01M1189.8 750.4h.01M1191.3 729.8h.01M1194.6 749.8h.01M1194.3 728.7h.01M1197.3 750.2h.01M1197.7 729.9h.01M1200.8 749.6h.01M1200.6 729.2h.01M1202.8 749.8h.01M1203.8 729.9h.01M1207.1 750.2h.01M1205.7 728.5h.01M1209.7 749.7h.01M1209.3 728.4h.01M1212.1 750.4h.01M1212.2 729.9h.01M1215.7 750.7h.01M1215.6 728.7h.01M1219.0 749.5h.01M1219.1 729.0h.01M1221.4 750.8h.01M1222.2 728.2h.01M1226.5 749.9h.01M1225.1 728.2h.01M1238.1 744.4h.01M1322.1 740.5h.01M1262.1 734.5h.01M1396.2 732.9h.01M1399.9 733.8h.01M1242.0 747.8h.01M1226.5 744.3h.01M1365.1 741.0h.01M1316.2 746.0h.01M1246.8 740.3h.01M1265.4 737.2h.01M1252.9 744.4h.01M1320.5 745.3h.01M1330.7 742.1h.01M1386.8 738.7h.01M1319.3 737.4h.01M1387.9 734.7h.01M1238.5 735.1h.01M1345.4 746.3h.01M1334.0 742.9h.01M1389.8 737.5h.01M1297.1 739.4h.01M1355.5 736.8h.01M1239.7 742.2h.01M1365.0 735.5h.01M1341.2 746.0h.01M1242.5 730.3h.01M1305.8 737.0h.01M1392.1 738.4h.01M1297.2 746.3h.01M1331.4 735.3h.01M1396.5 731.6h.01M1234.5 738.0h.01M1226.1 738.5h.01M1291.1 749.8h.01M1291.4 747.5h.01M1359.4 740.2h.01M1260.7 734.8h.01M1305.5 738.2h.01M1334.0 740.4h.01M1275.4 742.2h.01M1401.3 730.1h.01M1277.6 728.9h.01M1237.2 728.2h.01M1293.1 747.2h.01M1343.8 747.0h.01M1370.3 739.2h.01M1321.8 732.0h.01M1286.0 734.8h.01M1329.3 733.5h.01M1314.8 738.1h.01M1305.6 738.4h.01M1238.5 744.9h.01M1363.3 740.0h.01M1240.6 741.7h.01M1376.9 742.8h.01M1355.3 733.1h.01M1378.4 739.3h.01M1267.3 749.5h.01M1368.3 743.0h.01M1262.3 741.4h.01M1285.2 735.5h.01M1355.9 740.9h.01M1276.9 740.8h.01M1388.0 736.3h.01M1385.1 737.0h.01M1400.5 729.6h.01M1299.8 741.3h.01M1349.3 746.6h.01M1329.8 740.1h.01M1331.9 741.0h.01M1345.2 746.6h.01M1225.6 734.5h.01M1377.9 733.1h.01M1361.4 732.9h.01M1334.5 745.0h.01M1260.7 736.7h.01M1258.7 744.4h.01M1312.3 742.3h.01M1275.8 741.8h.01M1393.1 736.6h.01M1392.6 733.0h.01M1310.0 738.2h.01M1279.4 746.6h.01M1250.2 740.8h.01M1358.3 744.9h.01M1226.2 733.3h.01M1305.8 748.9h.01M1248.2 747.6h.01M1288.5 741.1h.01M1388.0 732.2h.01M1276.5 732.0h.01M1243.5 734.5h.01M1344.4 741.2h.01M1241.6 746.6h.01M1308.4 733.5h.01M1367.2 742.3h.01M1257.1 750.0h.01M1365.2 735.3h.01M1224.1 748.2h.01M1368.3 733.6h.01M1356.8 742.9h.01M1331.8 745.7h.01M1399.0 731.5h.01M1369.8 743.1h.01M1273.7 743.9h.01M1341.3 745.4h.01M1319.3 736.5h.01M1263.0 740.6h.01M1243.7 748.1h.01M1380.4 734.9h.01M1343.7 742.6h.01M1241.6 746.1h.01M1356.8 736.6h.01M1237.9 733.8h.01M1357.8 738.7h.01M1366.2 734.4h.01M1239.2 735.5h.01M1378.6 734.2h.01M1234.1 745.4h.01M1236.8 743.3h.01M1235.6 732.9h.01M1337.4 746.0h.01M1290.6 739.0h.01M1227.9 735.1h.01M1261.4 746.4h.01M1346.9 744.1h.01M1312.9 744.1h.01M1242.4 736.4h.01M1270.1 734.7h.01M1351.7 735.6h.01M1275.8 734.9h.01M1375.6 739.3h.01M1303.5 737.9h.01M1386.7 739.8h.01M1297.9 741.6h.01M1375.3 735.2h.01M1264.2 730.2h.01M1307.4 745.5h.01M1247.1 737.7h.01M1400.2 731.8h.01M1285.8 747.4h.01M1381.0 736.1h.01M1241.8 742.6h.01M1351.9 745.6h.01M1336.7 737.3h.01M1309.8 736.3h.01M1297.2 739.5h.01M1384.9 740.0h.01M1387.6 735.7h.01M1395.0 731.9h.01M1386.6 737.3h.01M1377.2 736.8h.01M1400.2 729.6h.01M1372.4 741.6h.01M1284.4 747.1h.01M1256.6 745.5h.01M1301.3 738.5h.01M1253.7 746.7h.01M1350.1 733.8h.01M1397.7 731.5h.01M1284.6 738.1h.01M1321.1 747.2h.01M1391.3 736.0h.01M1282.8 731.3h.01M1233.4 739.6h.01M1322.4 739.5h.01M1398.6 732.1h.01M1280.3 738.1h.01M1249.6 750.0h.01M1323.8 741.2h.01M1293.6 734.9h.01M1274.0 739.6h.01M1297.3 750.1h.01M1318.6 735.2h.01M1231.1 730.6h.01M1279.4 746.2h.01M1380.4 734.8h.01M1359.5 738.3h.01M1313.9 741.0h.01M1229.5 728.3h.01M1338.1 743.1h.01M1285.5 749.1h.01M1367.1 736.1h.01M1233.1 740.4h.01M1335.6 736.0h.01M1229.7 738.8h.01M1228.3 745.0h.01M1330.2 737.0h.01M1297.2 734.7h.01M1252.0 731.7h.01M1366.3 738.0h.01M1347.2 737.6h.01M1364.6 739.8h.01M1335.6 738.6h.01M1318.4 734.9h.01M1396.9 734.4h.01M1313.0 742.9h.01M1238.2 735.1h.01M1259.5 747.7h.01M1225.5 737.6h.01M1376.4 740.7h.01M1347.8 736.9h.01M1259.7 744.4h.01M1271.1 744.8h.01M1280.1 745.7h.01M1320.5 745.9h.01M1399.2 731.7h.01M1399.4 729.8h.01M1378.1 732.8h.01M1315.3 738.3h.01M1357.5 736.7h.01M1255.7 746.3h.01M1316.3 745.0h.01M1305.1 731.1h.01M1441.5 725.6h.01M1423.2 735.2h.01M1414.9 733.0h.01M1405.3 725.6h.01M1403.1 730.9h.01M1396.3 732.4h.01M1376.1 728.7h.01M1317.9 727.1h.01M1388.0 734.0h.01M1380.0 735.5h.01M1392.0 731.5h.01" stroke="#000" stroke-width="7" stroke-linecap="round" fill="none"/>
  <g fill="#222" font-size="20">
    <text x="717.5" y="499.6" text-anchor="end">9</text>
    <text x="717.5" y="589.3" text-anchor="end">6</text>
    <text x="717.5" y="679.8" text-anchor="end">3</text>
    <text x="717.5" y="770.8" text-anchor="end">0</text>
    <text x="954" y="809.7" text-anchor="middle" textLength="48" lengthAdjust="spacing">1e-02</text>
    <text x="1221.5" y="809.7" text-anchor="middle" textLength="52.8" lengthAdjust="spacing">1e+00</text>
    <text x="1488.6" y="809.7" text-anchor="middle" textLength="52.8" lengthAdjust="spacing">1e+02</text>
    <text x="1557.6" y="484.7" textLength="24.5" lengthAdjust="spacing">No</text>
    <text x="1557.6" y="525.4" textLength="29.8" lengthAdjust="spacing">Yes</text>
  </g>
  <g fill="#222" font-size="23">
    <text x="1009.7" y="843.4" textLength="201.6" lengthAdjust="spacing">Average Expression</text>
    <text transform="translate(696.9 711) rotate(-90)" textLength="233" lengthAdjust="spacing">Standardized Variance</text>
    <text x="1512.4" y="402.1" textLength="84.2" lengthAdjust="spacing">Variable</text>
  </g>
  <circle cx="1532.3" cy="477.2" r="3.5" fill="#000"/>
  <circle cx="1532.3" cy="518" r="3.5" fill="#ff0000"/>
</svg>

<svg id="anno" viewBox="0 0 1743 936" font-family="'Liberation Sans',sans-serif">
  <g fill="none" stroke="#ff0000" stroke-width="4.8">
    <rect x="117.6" y="222.7" width="238.7" height="77.8"/>
    <rect x="142.4" y="371.6" width="395.2" height="77.8"/>
    <rect x="142.4" y="456.4" width="395.2" height="89.8"/>
    <rect x="142.4" y="554.6" width="395.2" height="58.7"/>
    <rect x="142.4" y="715.8" width="408.3" height="82.8"/>
    <rect x="160.3" y="798.8" width="439.1" height="89.7"/>
    <rect x="635.6" y="294.3" width="1005.6" height="594.2"/>
  </g>
  <g stroke="#ff0000" stroke-width="4.9" fill="none">
    <path d="M54 261H116M79 410H141M79 501.5H141M79 584.5H141M79 756H141M97 843.5H159M1642 591L1689 590"/>
  </g>
  <g fill="#ff0000" stroke="#2f528f" stroke-width="2">
    <circle cx="32.1" cy="260.5" r="22.1"/>
    <circle cx="57.4" cy="409.3" r="22.1"/>
    <circle cx="57.4" cy="501.1" r="22.1"/>
    <circle cx="57.4" cy="584.3" r="22.1"/>
    <circle cx="57.4" cy="756.2" r="22.1"/>
    <circle cx="75.3" cy="843.4" r="22.1"/>
    <circle cx="1710.2" cy="590.3" r="22.1"/>
  </g>
  <g fill="#fff" font-size="32.5" text-anchor="middle" stroke="#fff" stroke-width="0.5">
    <text x="32.1" y="272.1">1</text>
    <text x="57.4" y="420.9">2</text>
    <text x="57.4" y="512.7">3</text>
    <text x="57.4" y="595.9">4</text>
    <text x="57.4" y="767.8">5</text>
    <text x="75.3" y="855">6</text>
    <text x="1710.2" y="601.9">7</text>
  </g>
</svg>
</body>
</html>
